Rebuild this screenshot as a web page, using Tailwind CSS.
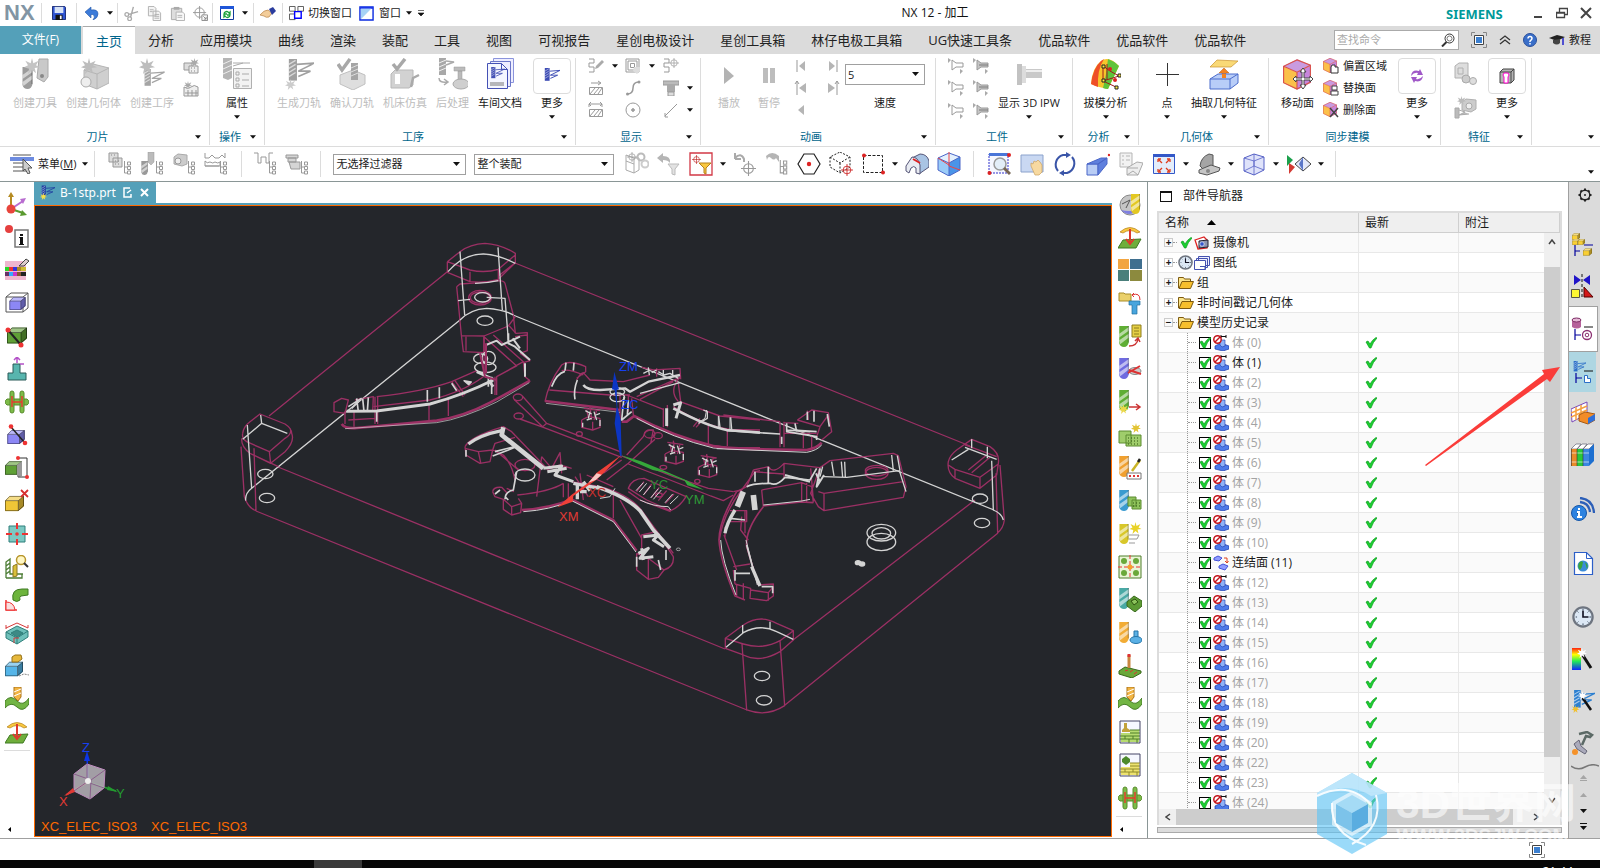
<!DOCTYPE html>
<html lang="zh-CN">
<head>
  <meta charset="UTF-8">
  <meta name="viewport" content="width=device-width, initial-scale=1.0">
  <title>NX 12 - 加工</title>
  <script src="https://cdn.jsdelivr.net/npm/@tailwindcss/browser@4"></script>
</head>
<body class="relative flex flex-col h-screen overflow-hidden bg-white text-[11px] leading-4 text-[#1a1a1a] font-['Open_Sans','Noto_Sans_CJK_SC',sans-serif]">

  <!-- Icon sprite -->
  <svg class="absolute w-0 h-0" aria-hidden="true">
    <!-- shared parts -->
    <symbol id="down" viewBox="0 0 7 4"><path d="M0 0h7L3.5 4z" fill="#111"/></symbol>
    <symbol id="drill" viewBox="0 0 10 22"><path d="M0 0h10v17q-1 5-5 5t-5-4z" fill="currentColor"/><path d="M0 8 10 1v4L0 12zM0 15l10-7v4L1 19z" fill="#fff" opacity=".55"/><path d="M9.500 0v17" stroke="#000" opacity=".3"/></symbol>
    <symbol id="cutter" viewBox="0 0 20 20"><path d="M1 0h6v16H1z" fill="currentColor"/><path d="M1 4l5-3M1 7l5-3M1 10l5-3M1 13l5-3" stroke="#fff" opacity=".6"/><path d="M7 4 20 3 8 9h9L8 13" fill="none" stroke="currentColor" stroke-width="1.200"/></symbol>
    <symbol id="box" viewBox="0 0 20 16"><path d="M0 5h14v11H0z" fill="currentColor"/><path d="M0 5 5 0h15l-6 5z" fill="currentColor"/><path d="M0 5 5 0h15l-6 5z" fill="#fff" opacity=".4"/><path d="m14 5 6-5v11l-6 5z" fill="currentColor"/><path d="m14 5 6-5v11l-6 5z" opacity=".3"/><path d="M.5 5h13.500v10.500H.5zM.5 5 5 .5h14.500L14 5m0 10.500 5.500-5V.5" fill="none" stroke="#000" opacity=".45"/></symbol>
    <symbol id="cube" viewBox="0 0 24 26"><path d="M12 0 24 5 12 11 0 6z" fill="#c99be0"/><path d="m0 6 12 5v15L0 20z" fill="#fbc04a"/><path d="m12 11 12-6v15l-12 6z" fill="#c786dc"/><path d="M12 .5 23.500 5v14.500L12 25.500.5 20V6zM.5 6 12 11l11.500-6M12 11v14" fill="none" stroke="#d9534f"/></symbol>
    <symbol id="star" viewBox="0 0 12 12"><path d="m6 0 1 4 4-2-2 3.500 3 1.500-4 .5 1 4-3-2.500L3 12l.8-4L0 7l3-1.500L1 2l4 2z" fill="currentColor"/></symbol>
    <symbol id="check" viewBox="0 0 12 12"><path d="M1 5 3 4l2 3q2-4 6-6.500l1 .5Q8 5 6 11H4.500z" fill="#19d030" stroke="#0b9a1c" stroke-width=".7"/></symbol>
    <symbol id="treeg" viewBox="0 0 8 14"><path d="M1 0v12h3M1 6h3M4 1h3v3H4zM4 5.500h3v3H4zM4 10h3v3H4z" fill="none" stroke="#999"/></symbol>
    <symbol id="target" viewBox="0 0 14 14"><circle cx="7" cy="7" r="4.500" fill="none" stroke="currentColor"/><path d="M7 0v14M0 7h14" stroke="currentColor"/></symbol>
    <symbol id="clock" viewBox="0 0 24 24"><circle cx="12" cy="12" r="10.500" fill="#dce8f5" stroke="#6e7580" stroke-width="2.400"/><path d="M12 5v7h6" fill="none" stroke="#112" stroke-width="1.800"/><path d="M12 3v1.500M12 19v2M4 12h1.500M19 12h2M6 6l1 1m10 10 1 1M6 18l1-1M17 7l1-1" stroke="#345"/></symbol>

    <!-- quick access -->
    <symbol id="save" viewBox="0 0 16 16"><path d="M.5.5h14l1 1v14H.5z" fill="#2f55d4" stroke="#0b1c66"/><path d="M3 1h10v7H3z" fill="#d7e2f5"/><path d="M4 10h8v6H4z" fill="#111"/><path d="M9 11h2v4H9z" fill="#fff"/></symbol>
    <symbol id="undo" viewBox="0 0 14 14"><path d="M0 6 6 1v3q7-1 7 4 0 4-5 6 2-3 1-4.500Q8 8 6 8.500V12z" fill="#3c7bd9" stroke="#2457a8" stroke-width=".6"/></symbol>
    <symbol id="cut" viewBox="0 0 16 16"><path d="M15 6 5 9m5-8L7 12" stroke="#aaa" stroke-width="1.500"/><circle cx="3" cy="9" r="2" fill="none" stroke="#aaa" stroke-width="1.400"/><circle cx="6" cy="13.500" r="2" fill="none" stroke="#aaa" stroke-width="1.400"/></symbol>
    <symbol id="copy" viewBox="0 0 16 16"><path d="M1.500.5h6l2 2v8h-8zM6.500 5.500h6l2 2v8h-8zM3 4h4M3 6h3M8 9h5M8 11h5M8 13h5" fill="#f4f4f4" stroke="#b0b0b0"/></symbol>
    <symbol id="paste" viewBox="0 0 16 16"><path d="M1.500 2.500h11v12h-11z" fill="#ddd" stroke="#aaa"/><path d="M4 1h6v3H4z" fill="#aaa"/><path d="M6.500 6.500h7l2 2v7h-9zM8 10h5M8 12h5" fill="#f8f8f8" stroke="#b0b0b0"/></symbol>
    <symbol id="snap" viewBox="0 0 16 16"><circle cx="7" cy="7" r="5" fill="none" stroke="#999"/><path d="M7 0v14M0 7h14" stroke="#999"/><path d="M9.500 9.500h6v6h-6zM11 11l3 3m0-2.500V14h-2.500" fill="#fff" stroke="#888"/></symbol>
    <symbol id="refresh" viewBox="0 0 14 14"><path d="M.5.5h13v13H.5z" fill="#fff" stroke="#123a9c"/><path d="M0 0h14v3H0z" fill="#1f56d8"/><path d="M4 7q3-3 5 0l1-1v3H7M10 10q-3 3-5 0l-1 1V8h3" fill="none" stroke="#18a038" stroke-width="1.300"/></symbol>
    <symbol id="hand" viewBox="0 0 16 12"><path d="M0 8q4-5 8-5l4 3-3 4q-3 1-5-1z" fill="#f3cd9a" stroke="#b88348" stroke-width=".7"/><path d="m9 2 4-2 3 4-4 4z" fill="#2b3d9e"/></symbol>
    <symbol id="switch" viewBox="0 0 16 16"><path d="M.5.5h6v5h-6zM9.500.5h6v5h-6zM.5 8.500h6v6h-6z" fill="#fff" stroke="#555"/><path d="M6 6h7v7H6z" fill="#fff" stroke="#00f" stroke-width="1.500"/></symbol>
    <symbol id="window" viewBox="0 0 16 16"><path d="M1 1h14v14H1z" fill="#fff" stroke="#0b2be0" stroke-width="1.500"/><path d="M1 1h14v2H1z" fill="#1a36e8"/><path d="M2 3h11L2 14z" fill="#a7d3f5"/></symbol>

    <!-- tab bar right side -->
    <symbol id="search" viewBox="0 0 14 14"><circle cx="8.500" cy="5.500" r="4.500" fill="none" stroke="#333"/><circle cx="8.500" cy="5.500" r="2.500" fill="none" stroke="#777"/><path d="M5.500 9 1 13.500" stroke="#333" stroke-width="2"/></symbol>
    <symbol id="full" viewBox="0 0 16 16"><path d="M.5 4V.5H4M12 .5h3.500V4M15.500 12v3.500H12M4 15.500H.5V12" fill="none" stroke="#888"/><path d="M3.500 3.500h9v9h-9z" fill="#fff" stroke="#444"/><path d="M5 5h6v6H5z" fill="#3b7fd0"/></symbol>
    <symbol id="help" viewBox="0 0 14 14"><circle cx="7" cy="7" r="6.500" fill="#3a6fc9" stroke="#2a4f9a"/><path d="M5 5.500Q5 3.500 7 3.500t2 2Q9 6.500 7 8v1M7 10v1.500" fill="none" stroke="#fff" stroke-width="1.500"/></symbol>
    <symbol id="cap" viewBox="0 0 16 12"><path d="m0 4 8-3 8 2-8 4z" fill="#222"/><path d="M4 6v3q4 3 7 0V5" fill="#444"/><path d="M14 4v7" stroke="#22c" stroke-width="1.500"/></symbol>

    <!-- ribbon, large -->
    <symbol id="r-tool" viewBox="0 0 30 32"><path d="M19 1h9v18l-4 5-7-4z" fill="#c9c9c9" stroke="#aaa"/><circle cx="22" cy="18" r="2" fill="#888"/><use href="#drill" x="2" y="9" width="11" height="22" color="#9c9c9c"/><use href="#star" x="4" y="0" width="16" height="16" color="#c4c4c4"/></symbol>
    <symbol id="r-geom" viewBox="0 0 30 32"><path d="m5 12 9-6 16 4v15l-12 6L5 26z" fill="#cfcfcf" stroke="#b4b4b4"/><path d="m5 12 13 4v15M18 16l12-6" fill="none" stroke="#b4b4b4"/><circle cx="7" cy="24" r="5" fill="#eee" stroke="#aaa"/><use href="#star" x="2" y="0" width="16" height="16" color="#bdbdbd"/></symbol>
    <symbol id="r-oper" viewBox="0 0 30 32"><use href="#cutter" x="4" y="11" width="26" height="21" color="#a5a5a5"/><use href="#star" x="2" y="0" width="16" height="16" color="#bdbdbd"/></symbol>
    <symbol id="r-prop" viewBox="0 0 30 32"><path d="M1 0h9v20l-4 2-5-2z" fill="#b5b5b5"/><path d="M1 6l9-4M1 11l9-4M1 16l9-4" stroke="#eee"/><path d="M11 5h17M11 8l10-3" stroke="#aaa"/><path d="M11.500 10.500h18v20h-18z" fill="#f2f2f2" stroke="#b0b0b0"/><path d="M14 14h3v3h-3zM14 20h3v3h-3zM14 26h3v3h-3zM20 16h7M20 22h7M20 28h7" fill="none" stroke="#aaa"/></symbol>
    <symbol id="r-gen" viewBox="0 0 30 32"><use href="#cutter" x="3" y="1" width="28" height="27" color="#a0a0a0"/><use href="#star" x="0" y="21" width="13" height="11" color="#ccc"/></symbol>
    <symbol id="r-verify" viewBox="0 0 30 32"><path d="m3 17 13-5 12 5v9l-12 6L3 26z" fill="#dedede" stroke="#c0c0c0"/><path d="M14 5h7v17h-7z" fill="#a5a5a5"/><path d="m14 10 7-3m-7 7 7-3m-7 7 7-3" stroke="#ddd"/><path d="m1 6 4 6L13 1" fill="none" stroke="#a8a8a8" stroke-width="3.500"/></symbol>
    <symbol id="r-sim" viewBox="0 0 30 32"><path d="m1 16 4-4h18v15l-4 3H1z" fill="#d2d2d2" stroke="#b8b8b8"/><path d="M5 16h5v10H5z" fill="#fff"/><path d="m21 29 2-9 6-3" fill="none" stroke="#aaa" stroke-width="2.500"/><path d="m3 6 4 5 8-10" fill="none" stroke="#a8a8a8" stroke-width="3.500"/></symbol>
    <symbol id="r-post" viewBox="0 0 30 32"><path d="M1 0h7v17H1z" fill="#a8a8a8"/><path d="m1 5 7-3M1 9l7-3m-7 7 7-3" stroke="#eee"/><path d="M8 3l8 1-8 3M1 20q0 5 8 4m-3-3 4 3-4 3" fill="none" stroke="#aaa" stroke-width="1.500"/><path d="M16 9h11v4H16zM20 13h4v9h-4z" fill="#bbb" stroke="#999" stroke-width=".5"/><ellipse cx="23" cy="26" rx="8" ry="5" fill="#cfcfcf" stroke="#aaa"/></symbol>
    <symbol id="r-doc" viewBox="0 0 30 32"><path d="M8.500.5h20v24h-20z" fill="#eef" stroke="#8b94dc"/><path d="M5.500 3.500h20v25h-20z" fill="#eef" stroke="#6b76c8"/><path d="M2.500 5.500h14l6 6v19h-20z" fill="#f4f6ff" stroke="#4451b5"/><path d="M16.500 5.500v6h6" fill="none" stroke="#4451b5"/><use href="#cutter" x="5" y="9" width="15" height="14" color="#4451b5"/><path d="M5 25h14M5 27h14" stroke="#777"/></symbol>
    <symbol id="r-play" viewBox="0 0 30 32"><path d="M10 9v17l10-8z" fill="#b3b3b3"/></symbol>
    <symbol id="r-pause" viewBox="0 0 30 32"><path d="M9 10h5v15H9zM16 10h5v15h-5z" fill="#bdbdbd"/></symbol>
    <symbol id="r-ipw" viewBox="0 0 30 32"><path d="M3 6h5v21H3z" fill="#c2c2c2"/><path d="M8 8h4v17H8z" fill="#dcdcdc"/><path d="M12 11h16v9H12z" fill="#c9c9c9"/><path d="M12 13h16" stroke="#eee" stroke-width="2"/></symbol>
    <symbol id="r-draft" viewBox="0 0 30 32"><path d="M10 3Q18-3 28 8L17 31Q9 30 0 26 1 10 10 3z" fill="#f7c52c"/><path d="M17 1q6 2 11 7L17 31q-3 0-5-1 2-8 3-14z" fill="#5fc43a"/><path d="M10 3Q2 10 0 26q4 2 7 3Q6 12 13 1z" fill="#ee4f27"/><path d="M12 8v15l16-5-9-5zM12 23l13 6M16 6v16" fill="none" stroke="#a01a1a"/><path d="M11 7h3v3h-3zM11 21h3v3h-3zM27 16h3v3h-3zM24 28h3v3h-3z" fill="#ffec3d" stroke="#222"/><circle cx="19" cy="11" r="2" fill="#d22"/><circle cx="24" cy="22" r="2" fill="#d22"/></symbol>
    <symbol id="r-point" viewBox="0 0 30 32"><path d="M15.500 5v23M4 16.500h23" stroke="#333"/></symbol>
    <symbol id="r-extract" viewBox="0 0 30 32"><path d="m8 2 21 1-7 6H1z" fill="#f9d976" stroke="#c9922e" stroke-width=".7"/><path d="M13 22v-7h-3l5-5 5 5h-3v7z" fill="#f58220" stroke="#b55a10" stroke-width=".5"/><path d="m1 21 8-5h20v9l-8 6H1z" fill="#b8cdf8" stroke="#4b6ccc"/><path d="M1 21h20l8-5M21 21v10" fill="none" stroke="#4b6ccc"/><path d="M13 20v-4h4v4z" fill="#f58220"/></symbol>
    <symbol id="r-move" viewBox="0 0 30 32"><use href="#cube" x="0" y="1" width="28" height="31"/><path d="m20 10 3 4h-2v6h6v-2l3 3-3 3v-2h-6v5h2l-3 4-3-4h2v-5h-6v2l-3-3 3-3v2h6v-6h-2z" fill="#fff" stroke="#444"/></symbol>
    <symbol id="more-op" viewBox="0 0 16 16"><use href="#cutter" x="0" y="0" width="16" height="16" color="#3c4bb4"/></symbol>
    <symbol id="more-sync" viewBox="0 0 16 16"><path d="M2 8Q3 1 10 3l1-2 3 6H8l1-2Q5 4 2 8z" fill="#a058c8"/><path d="M14 8q-1 7-8 5l-1 2-3-6h6l-1 2q4 1 7-3z" fill="#a058c8"/></symbol>
    <symbol id="more-feat" viewBox="0 0 16 16"><path d="m1 4 3-3h11v11l-3 3H1z" fill="#b5b5b5" stroke="#444"/><path d="M1 4h11v11M12 4l3-3" fill="none" stroke="#444"/><path d="M5 15V9Q3 7 5 5h4q2 2 0 4v6z" fill="#fff" stroke="#f0c"/></symbol>
    <symbol id="f1" viewBox="0 0 24 24"><path d="m2 4 4-3h9v12l-4 3H2zM5 6h5v6H5z" fill="#ddd" stroke="#b0b0b0"/><circle cx="13" cy="17" r="4" fill="#ccc" stroke="#aaa"/><circle cx="20" cy="19" r="3.500" fill="#ddd" stroke="#aaa"/></symbol>
    <symbol id="f2" viewBox="0 0 24 24"><path d="m9 6 4-3 10 1v9l-5 3-9-2z" fill="#ccc" stroke="#b0b0b0"/><circle cx="16" cy="10" r="3" fill="#eee" stroke="#aaa"/><use href="#star" x="4" y="0" width="9" height="9" color="#bbb"/><path d="M2 12h4v10H2zM6 14l6 2-6 3 10-1" fill="#bbb" stroke="#aaa"/></symbol>

    <!-- ribbon, small -->
    <symbol id="s1" viewBox="0 0 16 16"><path d="M1 1h5v4H1v4h5v5H1" fill="none" stroke="#999"/><path d="m8 8 6-6 2 2-6 6-3 1z" fill="#aaa"/></symbol>
    <symbol id="s2" viewBox="0 0 16 16"><path d="M1 1h13v13H1zM3 3h9v9H3zM5.500 5.500h4v4h-4z" fill="none" stroke="#999"/><path d="M9 9h6v4l-3 3-4-3z" fill="#ddd"/></symbol>
    <symbol id="s3" viewBox="0 0 16 16"><path d="M1 1h5v4H1v4h5v5H1" fill="none" stroke="#999"/><use href="#target" x="6" y="0" width="10" height="10" color="#999"/></symbol>
    <symbol id="s4" viewBox="0 0 16 16"><path d="M1.500 7.500h13v7h-13zM2 14l5-6m-1 6 5-6m-1 6 4-6M3 3h9m-2-2 3 2-3 2" fill="none" stroke="#999"/></symbol>
    <symbol id="s5" viewBox="0 0 16 16"><path d="M2 14q6 0 6-6t6-6" fill="none" stroke="#999" stroke-width="1.500"/><circle cx="2.500" cy="14" r="1.500" fill="#999"/><circle cx="14" cy="2" r="1.500" fill="#999"/></symbol>
    <symbol id="s6" viewBox="0 0 16 16"><path d="M0 1h16v4H0z" fill="#bbb" stroke="#999"/><path d="M4 5h8v7H4z" fill="#aaa"/><path d="M5 12h6v4H5z" fill="#ddd" stroke="#999"/></symbol>
    <symbol id="s7" viewBox="0 0 16 16"><path d="M1.500 7.500h13v7h-13zM2 14l5-6m-1 6 5-6m-1 6 4-6M1 5V2h13v3M3 0 1 2l2 2m9-4 2 2-2 2" fill="none" stroke="#999"/></symbol>
    <symbol id="s8" viewBox="0 0 16 16"><circle cx="8" cy="8" r="7" fill="none" stroke="#999"/><path d="M8 6v4M6 8h4" stroke="#999" stroke-width="1.500"/></symbol>
    <symbol id="s9" viewBox="0 0 16 16"><path d="m2 14 12-12M2 11v4h3" fill="none" stroke="#999"/></symbol>
    <symbol id="p1" viewBox="0 0 16 16"><path d="M4 2v12" stroke="#999"/><path d="M12 3v10L6 8z" fill="#b5b5b5"/></symbol>
    <symbol id="p2" viewBox="0 0 16 16"><path d="M12 2v12" stroke="#999"/><path d="M4 3v10l6-5z" fill="#b5b5b5"/></symbol>
    <symbol id="p3" viewBox="0 0 16 16"><path d="M4 1v14M2 4l2-3 2 3" fill="none" stroke="#999"/><path d="M13 3v10L6 8z" fill="#b5b5b5"/></symbol>
    <symbol id="p4" viewBox="0 0 16 16"><path d="M12 1v14m-2-11 2-3 2 3" fill="none" stroke="#999"/><path d="M3 3v10l7-5z" fill="#b5b5b5"/></symbol>
    <symbol id="p5" viewBox="0 0 16 16"><path d="M11 3v10L5 8z" fill="#b5b5b5"/></symbol>
    <symbol id="w1" viewBox="0 0 16 16"><path d="M4 2v10l4-3h7V5H8z" fill="#fff" stroke="#999"/><path d="m0 0 3 2-3 3zM12 11l3 2-3 3z" fill="#aaa"/></symbol>
    <symbol id="w2" viewBox="0 0 16 16"><path d="M4 2v10l4-3h7V5H8z" fill="#c5c5c5" stroke="#999"/><path d="M6 7h9" stroke="#777"/><path d="m0 0 3 2-3 3zM12 11l3 2-3 3z" fill="#aaa"/></symbol>
    <symbol id="g1" viewBox="0 0 16 16"><path d="M1 5h8v7H1z" fill="#ddd" stroke="#999"/><path d="M6 8h9v7H6z" fill="#eee" stroke="#999"/><path d="M8 10h1m2 0h1m-4 3h1m2 0h1" stroke="#888"/><use href="#star" x="7" y="0" width="9" height="9" color="#aaa"/></symbol>
    <symbol id="g2" viewBox="0 0 16 16"><path d="M1 6q4 3 7 0t7 0v9H1zM2 12h13M5 9v6m4-6v6m4-6v6" fill="#eee" stroke="#999"/><use href="#star" x="1" y="0" width="8" height="8" color="#aaa"/></symbol>
    <symbol id="y1" viewBox="0 0 16 16"><use href="#cube" width="14" height="15"/><path d="M9 7h3v2h3v6H8V9z" fill="#fff" stroke="#333"/></symbol>
    <symbol id="y2" viewBox="0 0 16 16"><use href="#cube" width="14" height="15"/><path d="M9 6h5v4H9zM8 11h7v4H8z" fill="#fff" stroke="#444"/></symbol>
    <symbol id="y3" viewBox="0 0 16 16"><use href="#cube" width="14" height="15"/><path d="m7 6 8 9m0-9-8 9" stroke="#444" stroke-width="1.500"/></symbol>

    <!-- selection bar -->
    <symbol id="menu" viewBox="0 0 26 20"><path d="M3 1h18M3 9h14M3 13h14M3 17h14" stroke="#555"/><path d="M0 3h24v4H0z" fill="#6d8be0"/><path d="m13 5 9 9h-4l2 5-2 1-3-5-2 2z" fill="#ccc" stroke="#555"/></symbol>
    <symbol id="b1" viewBox="0 0 24 24"><path d="M1 1h9v9H1zM5 6h9v9H5z" fill="#ddd" stroke="#999"/><path d="M3 3h1m2 0h1M7 9h1m2 0h1m-4 3h1m2 0h1" stroke="#888"/><use href="#treeg" x="15" y="9" width="9" height="14"/></symbol>
    <symbol id="b2" viewBox="0 0 24 24"><path d="M8 0h6v10l-3 3-3-3z" fill="#bbb" stroke="#999" stroke-width=".5"/><use href="#drill" x="1" y="9" width="7" height="14" color="#999"/><use href="#treeg" x="15" y="9" width="9" height="14"/></symbol>
    <symbol id="b3" viewBox="0 0 24 24"><path d="m2 5 4-3 9 1v9l-5 2-8-2z" fill="#ccc" stroke="#aaa"/><circle cx="6" cy="9" r="3" fill="#eee" stroke="#999"/><use href="#treeg" x="15" y="9" width="9" height="14"/></symbol>
    <symbol id="b4" viewBox="0 0 24 24"><path d="M1 1v5h4l3-3 3 3h4l3-3 3 3V1M1 14V9q2 3 5 1 3 2 5 0 3 2 5 0v4zM1 14h14" fill="none" stroke="#999"/><use href="#treeg" x="15" y="9" width="9" height="14"/></symbol>
    <symbol id="b5" viewBox="0 0 24 24"><path d="M1 1h4v10h3V5h5v6h3V1h4" fill="none" stroke="#999"/><use href="#treeg" x="15" y="9" width="9" height="14"/></symbol>
    <symbol id="b6" viewBox="0 0 24 24"><path d="M1 3h12v3H1zM3 6h8v4H3zM4 10h11v7H6z" fill="#d5d5d5" stroke="#999"/><use href="#treeg" x="15" y="9" width="9" height="14"/></symbol>
    <symbol id="c1" viewBox="0 0 24 24"><path d="m1 3 8 3v15l-8-3zM1 9l8 3m0-6h5v12l-5 3" fill="none" stroke="#aaa"/><circle cx="16" cy="5" r="3.500" fill="none" stroke="#bbb" stroke-width="2"/><circle cx="20" cy="12" r="3.500" fill="none" stroke="#ccc" stroke-width="2"/><use href="#target" x="2" y="0" width="10" height="10" color="#999"/></symbol>
    <symbol id="c2" viewBox="0 0 24 24"><path d="M0 6 6 1v3q8 0 7 7-2-3-7-3v3z" fill="#b5b5b5"/><path d="M11 12h11l-4 5v6l-3-1v-5z" fill="#e2e2e2" stroke="#bbb"/></symbol>
    <symbol id="c3" viewBox="0 0 24 24"><path d="M1 1h22v22H1z" fill="#fff" stroke="#d23845" stroke-width="1.300"/><use href="#target" x="3" y="3" width="9" height="9" color="#b22"/><path d="M10 11h12l-5 5v6l-2-1v-5z" fill="#f9c840" stroke="#b5811c"/></symbol>
    <symbol id="c4" viewBox="0 0 24 24"><path d="M2 7V1m0 6h6M2 6q6-6 9 1v3" fill="none" stroke="#aaa" stroke-width="2"/><use href="#target" x="8" y="9" width="15" height="15" color="#999"/></symbol>
    <symbol id="c5" viewBox="0 0 24 24"><path d="M1 4q6-6 13 0v6l-3-4q-2 3-5 0t-4 2z" fill="#b5b5b5"/><use href="#treeg" x="14" y="8" width="9" height="15"/></symbol>
    <symbol id="c6" viewBox="0 0 24 24"><path d="M7 2h10l6 10-6 10H7L1 12z" fill="none" stroke="#222" stroke-width="1.200"/><circle cx="12" cy="12" r="2.200" fill="#d22"/></symbol>
    <symbol id="c7" viewBox="0 0 24 24"><path d="M11 0 21 5v10l-10 6L1 15V5zM1 5l10 6 10-6M11 11v10" fill="none" stroke="#222" stroke-dasharray="2 1.500"/><use href="#target" x="12" y="12" width="12" height="12" color="#c22"/></symbol>
    <symbol id="c8" viewBox="0 0 24 24"><path d="M2.500 3.500h19v17h-19z" fill="none" stroke="#222" stroke-dasharray="3 1.500"/><circle cx="3" cy="3.500" r="2" fill="#d22"/><circle cx="22" cy="20.500" r="2" fill="#d22"/></symbol>
    <symbol id="c9" viewBox="0 0 24 24"><path d="m7 6 8-4q7 0 9 7v6l-10 7V12Q12 7 7 6z" fill="#a9c4e4" stroke="#557"/><path d="m1 14 6-9q6 0 8 8v9l-4-1v-5q-2-3-5 0l-2 5-3-2z" fill="#e8ebf2" stroke="#557"/><path d="m8 7 7 4" stroke="#d22" stroke-width="2"/></symbol>
    <symbol id="c10" viewBox="0 0 24 24"><path d="m1 6 11 5v13L1 18z" fill="#9bccf8"/><path d="m1 6 11-5 11 4-11 6z" fill="#e3f0fd"/><path d="m12 11 11-6v13l-11 6z" fill="#4a94e8"/><path d="m1 6 11-5 11 4v13l-11 6L1 18zM1 6l11 5v13M12 11l11-6" fill="none" stroke="#4a66c8"/><path d="M12 0v14l11 4M1 6l11 7" fill="none" stroke="#e44"/></symbol>
    <symbol id="d1" viewBox="0 0 24 24"><path d="M2 2h19v19H2z" fill="#f5f7ff" stroke="#33c" stroke-dasharray="2 1"/><path d="M2 1h19v3H2z" fill="#4a76d8"/><circle cx="13" cy="12" r="6" fill="#e3eef8" stroke="#999" stroke-width="1.500"/><path d="m17 16 6 6" stroke="#765" stroke-width="3"/><circle cx="2.500" cy="21" r="2" fill="#d22"/><circle cx="22" cy="3" r="2" fill="#d22"/></symbol>
    <symbol id="d2" viewBox="0 0 24 24"><path d="M1 3h22v17H1z" fill="#c9d8f2" stroke="#8ba2cc"/><path d="M11 14v-3l2 1 1-3 2 1 2-2 2 2 2 3v7l-3 3h-4z" fill="#f7d9a0" stroke="#c9a060" stroke-width=".7"/></symbol>
    <symbol id="d3" viewBox="0 0 24 24"><path d="M5 19A10 10 0 0 1 10 3h5M19 5a10 10 0 0 1-5 16H9" fill="none" stroke="#3a55a8" stroke-width="2"/><path d="M13 0v6l5-3zM11 24v-6l-5 3z" fill="#3a55a8"/></symbol>
    <symbol id="d4" viewBox="0 0 24 24"><path d="M1 12h11v11H1z" fill="#b9cdf5" stroke="#4a66c8"/><path d="m1 12 14-6h6l-9 6zM12 12l9-6v6l-9 11z" fill="#5f80dd" stroke="#4a66c8"/><circle cx="23" cy="3" r="1.200" fill="#d22"/></symbol>
    <symbol id="d5" viewBox="0 0 24 24"><path d="M1 1h12v14H1zM3 4h2m-2 4h2m-2 4h2m2-8h4M7 8h4" fill="#f2f2f2" stroke="#b5b5b5"/><path d="m8 16 10-6 6 1-5 12H8zM8 16h11M8 23l6-4 5 4" fill="#eee" stroke="#aaa"/></symbol>
    <symbol id="d6" viewBox="0 0 24 24"><path d="M1.500 2.500h21v19h-21z" fill="#e3edfb" stroke="#3358c8"/><path d="M1 2h22v3H1z" fill="#3358c8"/><path d="m7 8 3 3m7-3-3 3m-7 8 3-3m7 3-3-3M6 7h3M6 7v3m12-3h-3m3 0v3M6 20h3m-3 0v-3m12 3h-3m3 0v-3" stroke="#e03c1c" stroke-width="1.300"/></symbol>
    <symbol id="d7" viewBox="0 0 24 24"><path d="M3 14Q4 5 12 2l4 1v12l-9 3z" fill="#a5a5a5" stroke="#555"/><path d="m2 18 12-5 9 3-1 3-12 4-8-2z" fill="#c5c5c5" stroke="#555"/><circle cx="11" cy="19" r="2" fill="#888"/></symbol>
    <symbol id="d8" viewBox="0 0 24 24"><path d="m2 6 10-4 10 3v13l-10 5-10-4z" fill="#dfe3fa" stroke="#5560c5"/><path d="m2 6 10 3v14M12 9l10-4M12 2v12L2 19m10-5 10 4" fill="none" stroke="#5560c5" stroke-width=".8"/></symbol>
    <symbol id="d9" viewBox="0 0 24 24"><path d="m0 3 6 5-6 6z" fill="#1ca04c"/><path d="m2 11 6 4-6 7z" fill="#d33a33"/><path d="m8 12 8-7 8 7-8 7z" fill="#e3e8fa" stroke="#444"/><path d="m12 12 4-7v14z" fill="#5a76c8"/></symbol>

    <!-- left tool column -->
    <symbol id="l1" viewBox="0 0 24 24"><path d="M6 18V3" stroke="#b58b22" stroke-width="2"/><path d="m3 5 3-5 3 5z" fill="#b58b22"/><path d="m6 17 12-8" stroke="#b86cd0" stroke-width="2"/><path d="m15 7 6-1-3 6z" fill="#b86cd0"/><path d="m6 17 12 4" stroke="#5a9a30" stroke-width="2"/><path d="m17 18 5 5-7 1z" fill="#5a9a30"/><circle cx="6" cy="17" r="4.500" fill="#e8453c"/></symbol>
    <symbol id="l2" viewBox="0 0 24 24"><circle cx="4" cy="4" r="4" fill="#e5403f"/><path d="M10 5h13v17H10z" fill="#fff" stroke="#777" stroke-width="1.500"/><path d="M15 9h3v2h-3zM14 12h4v7h1v1h-5v-1h1v-6h-1z" fill="#111"/></symbol>
    <symbol id="l3" viewBox="0 0 24 24"><path d="M0 3h21v19H0z" fill="#efb6cf"/><path d="M0 9h4v4H0z" fill="#27d827"/><path d="M4 9h4v4H4z" fill="#e33"/><path d="M8 9h4v4H8z" fill="#33d"/><path d="M12 9h4v4h-4z" fill="#a82"/><path d="M16 9h5v4h-5z" fill="#cb3"/><path d="M0 14h4v4H0z" fill="#636"/><path d="M4 14h4v4H4z" fill="#3af"/><path d="M8 14h4v4H8z" fill="#c3c"/><path d="M12 14h4v4h-4z" fill="#853"/><path d="M16 14h5v4h-5z" fill="#222"/><path d="m14 8 7-7 3 2-5 5z" fill="#dcc" stroke="#444"/></symbol>
    <symbol id="l4" viewBox="0 0 24 24"><path d="M1 6h17v15H1zM1 6l5-4h17v15l-5 4M18 6l5-4" fill="none" stroke="#555"/><use href="#box" x="4" y="6" width="17" height="13" color="#8c87f5"/></symbol>
    <symbol id="l5" viewBox="0 0 24 24"><use href="#box" x="2" y="3" width="20" height="17" color="#5fa036"/><path d="m3 6 13 15" stroke="#222" stroke-width="2"/><circle cx="3" cy="6" r="2.500" fill="#e33"/><circle cx="16" cy="21" r="2.500" fill="#e33"/></symbol>
    <symbol id="l6" viewBox="0 0 24 24"><path d="M8 7h7v9h6v7H3v-7h5z" fill="#58b5ae" stroke="#2b5a58"/><path d="M12 6V0M9 3l3-3 3 3m0 4h4" fill="none" stroke="#b452c8" stroke-width="1.500"/></symbol>
    <symbol id="l7" viewBox="0 0 24 24"><path d="M2 9h20q4 3 0 6H2q-4-3 0-6z" fill="#7dbb48" stroke="#588c2c"/><rect x="5" y="1" width="4" height="22" rx="2" fill="#7dbb48" stroke="#588c2c"/><rect x="15" y="1" width="4" height="22" rx="2" fill="#7dbb48" stroke="#588c2c"/><path d="M7 12h10M7 6v11m10-11v11" stroke="#e33f2e" stroke-width="1.500"/></symbol>
    <symbol id="l8" viewBox="0 0 24 24"><use href="#box" x="2" y="7" width="18" height="14" color="#8c87f5"/><path d="m6 4 14 16" stroke="#222" stroke-width="1.500"/><circle cx="6" cy="3.500" r="2.300" fill="#e33"/><circle cx="20" cy="20" r="2.300" fill="#e33"/></symbol>
    <symbol id="l9" viewBox="0 0 24 24"><use href="#box" x="0" y="4" width="17" height="16" color="#5fa036"/><path d="m12 9 5-4v15l-5 1z" fill="#999"/><path d="M13 2h9v19H13" fill="none" stroke="#333"/><circle cx="13" cy="2" r="2" fill="#e33"/><circle cx="22" cy="21" r="2" fill="#e33"/></symbol>
    <symbol id="l10" viewBox="0 0 24 24"><use href="#box" x="0" y="6" width="19" height="17" color="#efc637"/><path d="m16 1 7 7m0-7-7 7" stroke="#d62f2f" stroke-width="1.800"/></symbol>
    <symbol id="l11" viewBox="0 0 24 24"><path d="M4 4h16v16H4z" fill="#7cc8c2" stroke="#2f7f7a"/><path d="M12 1v6m0 10v6M1 12h6m10 0h6" stroke="#e33" stroke-width="2"/><circle cx="12" cy="12" r="1.800" fill="#e33"/></symbol>
    <symbol id="l12" viewBox="0 0 24 24"><path d="M1 23V7l4-3v15h13M1 23h16v-4M1 11l4-3m-4 7 4-3m-4 7 4-3" fill="none" stroke="#4c7c34" stroke-width="1.300"/><path d="m8 11 4-2v12l-4 1z" fill="#d9bf3a" stroke="#8c7720"/><circle cx="16" cy="5" r="4.500" fill="#fff7c4" stroke="#b8962c" stroke-width="1.500"/><path d="m19 8 4 4" stroke="#333" stroke-width="2"/></symbol>
    <symbol id="l13" viewBox="0 0 24 24"><path d="M8 12q-2-11 9-11h6v6l-7 1q-2 1-1 4-3 3-7 0z" fill="#6db43c" stroke="#3f7a22"/><path d="M1 12v10h11" fill="none" stroke="#e33" stroke-width="1.500"/><path d="M1 14q8 0 9 8H1z" fill="#f9dede" stroke="#e33"/></symbol>
    <symbol id="l14" viewBox="0 0 24 24"><path d="m1 11 11-6 11 5v6l-11 7-11-6z" fill="#6fc0ba" stroke="#2f7f7a"/><path d="m6 12 6-3 6 3-6 4z" fill="#3d8a85" stroke="#2f7f7a"/><path d="m1 11 11 6 11-7M12 17v6" fill="none" stroke="#2f7f7a"/><path d="M1 8V4m0 3 11-5 11 5V4M9 22v-5h5" fill="none" stroke="#d63a3a"/></symbol>
    <symbol id="l15" viewBox="0 0 24 24"><use href="#box" x="0" y="7" width="18" height="16" color="#55b5e8"/><path d="m7 3 3-2h6l1 4-4 3H7z" fill="#e6b83c" stroke="#96721a"/><path d="m14 22 5-2 5 1" fill="none" stroke="#888" stroke-dasharray="2 1"/></symbol>
    <symbol id="l16" viewBox="0 0 24 24"><path d="M9 0h7v10l-3 4-4-4z" fill="#f2b544" stroke="#ad7518"/><path d="m9 5 7-3m-7 7 7-3" stroke="#fff"/><path d="M0 14q6-7 12 0 6 6 12-3v6q-6 9-12 3-6-6-12 1z" fill="#72b544" stroke="#467f26"/></symbol>
    <symbol id="l17" viewBox="0 0 24 24"><path d="m5 15 18-1-5 9H0z" fill="#6fae3c" stroke="#3f7a22"/><path d="M2 7q10-9 20 0l-3 1q-7-5-14 0z" fill="#f9c840" stroke="#b5811c" stroke-width=".7"/><path d="M12 4v13m-4-3 4 5 4-5" fill="none" stroke="#dd3a2e" stroke-width="2"/></symbol>

    <!-- right tool column -->
    <symbol id="t1" viewBox="0 0 24 24"><circle cx="12" cy="13" r="10" fill="#c5c5c5" stroke="#888"/><path d="M3 18q8 8 16 0-8 2-16 0z" fill="#7f7fe0"/><path d="m4 12 8-4-4 8" fill="none" stroke="#555"/><use href="#drill" x="13" y="1" width="9" height="22" color="#e3c822"/></symbol>
    <symbol id="t3" viewBox="0 0 24 24"><path d="M0 1h11v10H0z" fill="#f2a541"/><path d="M12 1h12v10H12z" fill="#3f6f8f"/><path d="M0 12h11v11H0z" fill="#4a7f7b"/><path d="M12 12h12v11H12z" fill="#8c8a3e"/></symbol>
    <symbol id="t4" viewBox="0 0 24 24"><path d="M1 2h5l1 1h6v7H1z" fill="#ead06a" stroke="#a88c28"/><path d="M11 10h11v4h-3v9h-5v-9h-3z" fill="#48a5dd" stroke="#23719f" stroke-width=".7"/><path d="M14 4q8-3 8 5m-6-7-2 2 2 2" fill="none" stroke="#d33"/></symbol>
    <symbol id="t5" viewBox="0 0 24 24"><use href="#drill" x="1" y="2" width="10" height="21" color="#5fae34"/><path d="M14 1h9v12h-9z" fill="#e5cf45" stroke="#8f7f1f"/><path d="M16 4h5m-5 3h5m-5 3h5" stroke="#8f7f1f"/><path d="M11 22q8 0 9-7m-3 2 3-3 2 4" fill="none" stroke="#c33" stroke-width="1.500"/></symbol>
    <symbol id="t6" viewBox="0 0 24 24"><use href="#drill" x="1" y="1" width="10" height="21" color="#6f6be0"/><ellipse cx="17" cy="14" rx="6" ry="3.500" fill="#ccc" stroke="#888"/><path d="m10 16 12-7m-11 4 12 4" stroke="#d33" stroke-width="2"/></symbol>
    <symbol id="t7" viewBox="0 0 24 24"><use href="#drill" x="1" y="0" width="10" height="21" color="#5fae34"/><use href="#star" x="0" y="14" width="11" height="10" color="#ecd84a"/><path d="M11 17h10m-3-3 4 3-4 3" fill="none" stroke="#c33" stroke-width="1.500"/></symbol>
    <symbol id="t8" viewBox="0 0 24 24"><path d="M1 8h12v12H1zM8 12h15v11H8z" fill="#9fcd6b" stroke="#5d8c30"/><path d="M10 15h12m-12 3h12m-12 3h12" stroke="#2f5510" stroke-dasharray="1 2"/><use href="#star" x="12" y="0" width="12" height="10" color="#e3c433"/></symbol>
    <symbol id="t9" viewBox="0 0 24 24"><use href="#drill" x="1" y="0" width="10" height="21" color="#f0a030"/><path d="M9 17h14v6H9z" fill="#fff" stroke="#777"/><path d="M11 20h2m2 0h2m2 0h2" stroke="#d33" stroke-width="2"/><path d="m14 15 8-11" stroke="#c9b428" stroke-width="2.500"/><path d="m20 6 2-3" stroke="#222" stroke-width="2.500"/></symbol>
    <symbol id="t10" viewBox="0 0 24 24"><use href="#drill" x="1" y="1" width="10" height="21" color="#3a9bd0"/><path d="M10 8h8v9h-8zM14 11h9v9h-9z" fill="#8fc35c" stroke="#5d8c30"/><path d="M15 14h7m-7 3h7" stroke="#2f5510" stroke-dasharray="1 2"/></symbol>
    <symbol id="t11" viewBox="0 0 24 24"><use href="#drill" x="1" y="2" width="10" height="20" color="#d8c72a"/><path d="M11 13h10l-2 4h-8m0 4h6" fill="none" stroke="#999"/><use href="#star" x="11" y="0" width="13" height="12" color="#e9d227"/></symbol>
    <symbol id="t12" viewBox="0 0 24 24"><path d="M1 1h22v22H1z" fill="#eaf5d8" stroke="#4f7f2a"/><g fill="#6aa83a"><circle cx="6" cy="6" r="3"/><circle cx="18" cy="6" r="3"/><circle cx="6" cy="18" r="3"/><circle cx="18" cy="18" r="3"/></g><path d="M12 0v24M0 12h24" stroke="#e33" stroke-dasharray="4 2"/><circle cx="12" cy="12" r="2.500" fill="#f5a22a"/></symbol>
    <symbol id="t13" viewBox="0 0 24 24"><use href="#drill" x="1" y="0" width="10" height="21" color="#4aa9a5"/><path d="m9 14 7-6 8 5v5l-7 6-8-6z" fill="#5c9a34" stroke="#3a6a1c"/><path d="m13 13 4-2 3 3-4 3z" fill="#8cc35c" stroke="#2f5510"/></symbol>
    <symbol id="t14" viewBox="0 0 24 24"><use href="#drill" x="1" y="1" width="10" height="21" color="#f2ac35"/><path d="M16 10h4v7h-4z" fill="#5ab0e5" stroke="#2575a8"/><ellipse cx="18" cy="19" rx="6" ry="3.500" fill="#5ab0e5" stroke="#2575a8"/></symbol>
    <symbol id="t15" viewBox="0 0 24 24"><path d="m1 17 6-4 16 4v2l-9 5-13-4z" fill="#6aa83a" stroke="#3a6a1c"/><path d="m7 17 3-1m2 2 3-2m1 4 3-2" stroke="#d33"/><path d="M11 1v13" stroke="#c98640" stroke-width="3"/><path d="M11 0v3" stroke="#d33" stroke-width="3"/></symbol>
    <symbol id="t17" viewBox="0 0 24 24"><path d="M2 1h20v22H2z" fill="#f6f8ff" stroke="#446"/><path d="M3 13h9v-3h9v12H3z" fill="#b7dc70"/><path d="M2 16h20M2 19h20M12 10h10M12 13h10M7 16v3m8-3v3m-4 0v4m8-4v4" stroke="#4f7f2a"/><path d="M6 3h3v5l3 2v2H4v-2l2-2z" fill="#c2a23a"/></symbol>
    <symbol id="t18" viewBox="0 0 24 24"><path d="M2 1h20v22H2z" fill="#f6f8ff" stroke="#446"/><path d="M3 14h9v-4h9v12H3z" fill="#ede36f"/><path d="M2 16h20M2 19h20M12 10h10M12 13h10M7 16v3m8-3v3m-4 0v4m8-4v4" stroke="#8f8a2a"/><path d="m4 6 4-3 4 3v3l-4 3-4-3z" fill="#4c8a2c"/></symbol>

    <!-- resource bar -->
    <symbol id="gear" viewBox="0 0 24 24"><circle cx="12" cy="12" r="4.800" fill="none" stroke="#222" stroke-width="1.400"/><circle cx="12" cy="12" r="1" fill="#222"/><path d="M12 5.500v2m0 9v2M5.500 12h2m9 0h2M7.500 7.500l1.300 1.300m6.400 6.400 1.300 1.300m0-9-1.300 1.300m-6.400 6.400-1.300 1.300" stroke="#222" stroke-width="2"/></symbol>
    <symbol id="n1" viewBox="0 0 24 24"><path d="M4 12v11M4 18h5M13 12h9" fill="none" stroke="#00009c" stroke-width="1.200"/><use href="#box" x="1" y="0" width="8" height="7" color="#f9cf35"/><use href="#box" x="1" y="6" width="8" height="6" color="#f9cf35"/><use href="#box" x="7" y="6" width="7" height="6" color="#f9cf35"/><use href="#box" x="12" y="15" width="9" height="8" color="#f9cf35"/></symbol>
    <symbol id="n2" viewBox="0 0 24 24"><path d="M3 1v10l7-5zM19 1v10l-7-5z" fill="#2014c8"/><path d="M11 0v24" stroke="#111" stroke-dasharray="3 2"/><path d="M.5 15.500h8v8h-8z" fill="#fdf733" stroke="#554"/><path d="M13 13v10h9z" fill="#d31818" stroke="#500"/></symbol>
    <symbol id="n3" viewBox="0 0 24 24"><path d="M4 12v11M4 18h6" fill="none" stroke="#00009c" stroke-width="1.200"/><path d="M13 10h9" stroke="#111"/><path d="M1 3v7q5 3 9 0V3z" fill="#b5609a"/><ellipse cx="5.500" cy="3" rx="4.500" ry="2" fill="#e5b8d6" stroke="#7c2a63"/><circle cx="16" cy="18" r="4.500" fill="#fff" stroke="#8c3072" stroke-width="1.300"/><circle cx="16" cy="18" r="1.800" fill="none" stroke="#8c3072"/></symbol>
    <symbol id="n4" viewBox="0 0 24 24"><use href="#cutter" x="1" y="1" width="15" height="13" color="#2c6fc8"/><path d="M5 13v10M5 18h6" fill="none" stroke="#00009c" stroke-width="1.200"/><path d="M13 11h9" stroke="#111"/><path d="M13.500 15.500h3v3h3v4h-6z" fill="#fff" stroke="#2c6fc8"/></symbol>
    <symbol id="n5" viewBox="0 0 24 24"><path d="m0 8 16-7v12L1 21z" fill="#fff" stroke="#7a48b8"/><path d="m0 12 16-7M0 16l16-7M5 6v13m5-15v13" stroke="#f5a040" stroke-width="1.500"/><path d="m8 14 6-3 10 2v6l-7 4-9-3z" fill="#f28c28" stroke="#a85a10"/><path d="m17 17 7-4v6l-7 4z" fill="#2f6fd8"/></symbol>
    <symbol id="n6" viewBox="0 0 24 24"><path d="m0 6 5-5h5L6 6zM6 6l5-5h5l-4 5zM12 6l5-5h6l-5 5z" fill="#fff" stroke="#667" stroke-width=".7"/><path d="M0 6h6v17H0z" fill="#e88a28"/><path d="M6 6h6v17H6z" fill="#28c83a"/><path d="M12 6h6v17h-6z" fill="#3a86e0"/><path d="m18 6 5-5v17l-5 5z" fill="#1d6fd0"/><path d="M0 10h18M0 19h18" stroke="#fff" opacity=".6"/><path d="M.5 6v17M6 6v17m6-17v17" stroke="#333" stroke-width=".6"/></symbol>
    <symbol id="n7" viewBox="0 0 24 24"><circle cx="8" cy="16" r="7.500" fill="#2c82e0" stroke="#1556a8"/><path d="M8 11v2m-2 2h2v5m-2 0h5" stroke="#fff" stroke-width="2"/><path d="M9 1q13 1 14 15M9 5q9 1 10 10" fill="none" stroke="#2c5fb8" stroke-width="2.300"/></symbol>
    <symbol id="n8" viewBox="0 0 24 24"><path d="M3.500 1.500h12l6 6v16h-18z" fill="#fff" stroke="#2c5fc8" stroke-width="1.200"/><path d="M15.500 1.500v6h6" fill="none" stroke="#2c5fc8"/><circle cx="12" cy="15" r="5.500" fill="#3a8cd8"/><path d="M8 12q2-3 4-1l-1 5-2 3q-3-3-1-7zM14 11q4 3 2 7z" fill="#3aa53a"/></symbol>
    <linearGradient id="rainbow" x2="0" y2="1"><stop stop-color="#f21"/><stop offset=".3" stop-color="#ff0"/><stop offset=".6" stop-color="#2e5"/><stop offset="1" stop-color="#12f"/></linearGradient>
    <symbol id="n10" viewBox="0 0 24 24"><path d="M1 1h9v22H1z" fill="url(#rainbow)"/><path d="m11 7 9 14" stroke="#111" stroke-width="3"/><use href="#star" x="6" y="1" width="10" height="10" color="#fff"/></symbol>
    <symbol id="n11" viewBox="0 0 24 24"><use href="#cutter" x="2" y="1" width="22" height="22" color="#2c7fd0"/><path d="m11 8 9 13" stroke="#111" stroke-width="2.500"/><use href="#star" x="7" y="2" width="9" height="9" color="#fff"/><use href="#star" x="0" y="16" width="9" height="8" color="#f0c030"/></symbol>
    <symbol id="n12" viewBox="0 0 24 24"><path d="m8 3 8-2 5 3-2 2-4-1-4 9" fill="none" stroke="#5c6a66" stroke-width="2.500"/><path d="m3 13 5-4 2 6 6 5-2 3-8-5z" fill="#aab" stroke="#667"/><circle cx="4" cy="21" r="3" fill="#f5922a"/></symbol>

    <!-- tree -->
    <symbol id="folder" viewBox="0 0 16 13"><path d="M.5 12V1.500h5l1 1.500h6v2" fill="#fbe48a" stroke="#7d5a10"/><path d="m1 12.500 3-7h11.500l-3 7z" fill="#f7bf2c" stroke="#7d5a10"/></symbol>
    <symbol id="camera" viewBox="0 0 16 14"><path d="m1 4 9-3 3 3v8l-9 1z" fill="#fff" stroke="#d22" stroke-width="1.300"/><path d="m5 5 9-1v7l-9 1z" fill="#8c94b0" stroke="#223"/><circle cx="8" cy="8" r="2.200" fill="#35c" stroke="#fff" stroke-width=".6"/></symbol>
    <symbol id="sheets" viewBox="0 0 16 14"><path d="M4.500.5h11v9h-11zM2.500 2.500h11v9h-11z" fill="#eef" stroke="#4452b0"/><path d="M.5 4.500h11v9H.5z" fill="#fff" stroke="#4452b0"/><path d="M6 10.500h5v3" fill="none" stroke="#4452b0"/></symbol>
    <symbol id="body" viewBox="0 0 16 16"><path d="m2 11 6-3 8 3v3l-6 2-8-2z" fill="#4d79e8" stroke="#1b3ba8" stroke-width=".7"/><path d="M7 5h5v6l-3 1-2-2z" fill="#8fb2f8" stroke="#1b3ba8" stroke-width=".6"/><path d="M8 0v3m0-1.500h5M13 0v3" stroke="#111"/><circle cx="4.500" cy="4.500" r="3.700" fill="#fff" stroke="#c4131a" stroke-width="1.500"/><path d="m2 7 5-5" stroke="#c4131a" stroke-width="1.500"/></symbol>
    <symbol id="sew" viewBox="0 0 16 16"><path d="m1 3 4-2 4 2-3 3-5-1zM6 11l4-2 5 2-3 4-6-2z" fill="#8f9cff" stroke="#4452d8"/><path d="M11 3h3v5m-2-2 2 2 1.500-2" fill="none" stroke="#e0431c"/></symbol>
  </svg>

  <!-- Title bar -->
  <header class="flex items-center h-[26px] shrink-0">
    <div class="flex items-center">
      <span class="w-[41px] pl-1 text-[22px] font-bold text-[#8295a4] font-['Liberation_Sans',sans-serif]">NX</span>
      <span class="w-px h-5 bg-[#dcdcdc]"></span>
      <button aria-label="保存" class="px-[10px]"><svg class="w-[14px] h-[14px]"><use href="#save"/></svg></button>
      <span class="w-px h-5 bg-[#dcdcdc]"></span>
      <button aria-label="撤消" class="flex items-center gap-2 pl-2 pr-1"><svg class="w-[14px] h-[14px]"><use href="#undo"/></svg><svg class="w-[6px] h-1"><use href="#down"/></svg></button>
      <span class="w-px h-5 bg-[#dcdcdc]"></span>
      <div class="flex gap-2 pl-[6px] pr-1">
        <button aria-label="剪切"><svg class="w-[15px] h-[15px]"><use href="#cut"/></svg></button>
        <button aria-label="复制"><svg class="w-[15px] h-[15px]"><use href="#copy"/></svg></button>
        <button aria-label="粘贴"><svg class="w-[15px] h-[15px]"><use href="#paste"/></svg></button>
        <button aria-label="捕捉"><svg class="w-[15px] h-[15px]"><use href="#snap"/></svg></button>
      </div>
      <span class="w-px h-5 bg-[#dcdcdc]"></span>
      <button aria-label="刷新" class="flex items-center gap-2 pl-[7px] pr-[5px]"><svg class="w-[14px] h-[14px]"><use href="#refresh"/></svg><svg class="w-[6px] h-1"><use href="#down"/></svg></button>
      <span class="w-px h-5 bg-[#dcdcdc]"></span>
      <button aria-label="触控" class="px-[6px]"><svg class="w-4 h-3"><use href="#hand"/></svg></button>
      <span class="w-px h-5 bg-[#dcdcdc]"></span>
      <button class="flex items-center gap-1 pl-[6px]"><svg class="w-[15px] h-[15px]"><use href="#switch"/></svg>切换窗口</button>
      <button class="flex items-center gap-[5px] pl-[7px]"><svg class="w-[15px] h-[15px]"><use href="#window"/></svg>窗口<svg class="w-[6px] h-1"><use href="#down"/></svg></button>
      <button aria-label="自定义" class="pl-[6px]"><svg class="w-[6px] h-[7px]" viewBox="0 0 6 7"><path d="M0 .5h6M0 3h6L3 6z" fill="#111" stroke="#111" stroke-width=".6"/></svg></button>
    </div>
    <h1 class="flex-1 text-center text-xs text-[#111]">NX 12 - 加工</h1>
    <div class="flex items-center pr-2">
      <span class="w-[86px] pt-[2px] text-[13px] font-bold text-[#009999] font-['Noto_Sans',sans-serif]">SIEMENS</span>
      <button aria-label="最小化" class="w-6"><svg class="w-3 h-3" viewBox="0 0 12 12"><path d="M2 10h8" stroke="#444" stroke-width="2"/></svg></button>
      <button aria-label="还原" class="w-6"><svg class="w-3 h-3" viewBox="0 0 12 12"><path d="M3.500 5V1.500h8v6H9M.5 5.500h8v5h-8zM.5 6h8" fill="none" stroke="#444" stroke-width="1.300"/></svg></button>
      <button aria-label="关闭"><svg class="w-3 h-3" viewBox="0 0 12 12"><path d="m1 1 10 10m0-10L1 11" stroke="#444" stroke-width="2"/></svg></button>
    </div>
  </header>

  <!-- Ribbon tabs -->
  <nav class="flex h-7 shrink-0 bg-[#dbdbdb] text-[13px] text-[#222]">
    <button class="w-[81px] mr-[2px] bg-[#54a0b9] text-white text-xs">文件(F)</button>
    <a href="#" class="flex items-center px-[13px] bg-white text-[#00658c] border-t border-[#aaa]">主页</a>
    <a href="#" class="flex items-center px-[13px]">分析</a>
    <a href="#" class="flex items-center px-[13px]">应用模块</a>
    <a href="#" class="flex items-center px-[13px]">曲线</a>
    <a href="#" class="flex items-center px-[13px]">渲染</a>
    <a href="#" class="flex items-center px-[13px]">装配</a>
    <a href="#" class="flex items-center px-[13px]">工具</a>
    <a href="#" class="flex items-center px-[13px]">视图</a>
    <a href="#" class="flex items-center px-[13px]">可视报告</a>
    <a href="#" class="flex items-center px-[13px]">星创电极设计</a>
    <a href="#" class="flex items-center px-[13px]">星创工具箱</a>
    <a href="#" class="flex items-center px-[13px]">林仔电极工具箱</a>
    <a href="#" class="flex items-center px-[13px]">UG快速工具条</a>
    <a href="#" class="flex items-center px-[13px]">优品软件</a>
    <a href="#" class="flex items-center px-[13px]">优品软件</a>
    <a href="#" class="flex items-center px-[13px]">优品软件</a>
    <div class="flex items-center gap-3 ml-auto pr-[9px] text-[11px]">
      <label class="flex items-center w-[125px] h-5 bg-white border border-[#aaa]">
        <input type="text" aria-label="查找命令" placeholder="查找命令" class="w-[106px] pl-[2px] outline-none placeholder:text-[#aaa]">
        <svg class="w-[14px] h-[14px]"><use href="#search"/></svg>
      </label>
      <button aria-label="全屏"><svg class="w-4 h-4"><use href="#full"/></svg></button>
      <button aria-label="最小化功能区"><svg class="w-3 h-3" viewBox="0 0 12 12"><path d="m1 6 5-4 5 4M1 10l5-4 5 4" fill="none" stroke="#333" stroke-width="1.300"/></svg></button>
      <button aria-label="帮助"><svg class="w-[14px] h-[14px]"><use href="#help"/></svg></button>
      <a href="#" class="flex items-center gap-1"><svg class="w-4 h-3"><use href="#cap"/></svg>教程</a>
    </div>
  </nav>

  <!-- Ribbon -->
  <section class="flex h-[93px] shrink-0 pt-1 pb-px border-b border-[#dcdcdc]">
    <div class="flex flex-col justify-between w-[210px] border-r border-[#dcdcdc]">
      <div class="flex pl-[13px] gap-[9px] text-[#bdbdbd]">
        <button class="flex flex-col items-center"><svg class="w-[30px] h-8 mb-[5px]"><use href="#r-tool"/></svg>创建刀具</button>
        <button class="flex flex-col items-center"><svg class="w-[30px] h-8 mb-[5px]"><use href="#r-geom"/></svg>创建几何体</button>
        <button class="flex flex-col items-center"><svg class="w-[30px] h-8 mb-[5px]"><use href="#r-oper"/></svg>创建工序</button>
        <div class="flex flex-col gap-[7px]">
          <button aria-label="创建程序"><svg class="w-4 h-4"><use href="#g1"/></svg></button>
          <button aria-label="创建方法"><svg class="w-4 h-4"><use href="#g2"/></svg></button>
        </div>
      </div>
      <div class="flex items-center text-[#00658c]"><span class="flex-1 text-center">刀片</span><svg class="w-[6px] h-1 mr-[8px]"><use href="#down"/></svg></div>
    </div>

    <div class="flex flex-col justify-between w-[55px] border-r border-[#dcdcdc]">
      <button class="flex flex-col items-center"><svg class="w-[30px] h-8 mb-[5px]"><use href="#r-prop"/></svg>属性<svg class="w-[6px] h-1 mt-1"><use href="#down"/></svg></button>
      <div class="flex items-center text-[#00658c]"><span class="flex-1 text-center">操作</span><svg class="w-[6px] h-1 mr-[8px]"><use href="#down"/></svg></div>
    </div>

    <div class="flex flex-col justify-between w-[311px] border-r border-[#dcdcdc]">
      <div class="flex pl-3 gap-[9px] text-[#bdbdbd]">
        <button class="flex flex-col items-center"><svg class="w-[30px] h-8 mb-[5px]"><use href="#r-gen"/></svg>生成刀轨</button>
        <button class="flex flex-col items-center"><svg class="w-[30px] h-8 mb-[5px]"><use href="#r-verify"/></svg>确认刀轨</button>
        <button class="flex flex-col items-center"><svg class="w-[30px] h-8 mb-[5px]"><use href="#r-sim"/></svg>机床仿真</button>
        <button class="flex flex-col items-center"><svg class="w-[30px] h-8 mb-[5px]"><use href="#r-post"/></svg>后处理</button>
        <button class="flex flex-col items-center text-[#1a1a1a]"><svg class="w-[30px] h-8 mb-[5px]"><use href="#r-doc"/></svg>车间文档</button>
        <button class="flex flex-col items-center ml-[2px] text-[#1a1a1a]"><span class="grid place-items-center w-[38px] h-9 mb-px border border-[#dcdcdc] rounded"><svg class="w-4 h-4"><use href="#more-op"/></svg></span>更多<svg class="w-[6px] h-1 mt-1"><use href="#down"/></svg></button>
      </div>
      <div class="flex items-center text-[#00658c]"><span class="flex-1 text-center">工序</span><svg class="w-[6px] h-1 mr-[8px]"><use href="#down"/></svg></div>
    </div>

    <div class="flex flex-col justify-between w-[125px] border-r border-[#dcdcdc]">
      <div class="grid grid-cols-3 gap-y-[6px] pl-3">
        <button aria-label="编辑显示" class="flex items-center gap-2"><svg class="w-4 h-4"><use href="#s1"/></svg><svg class="w-[6px] h-1"><use href="#down"/></svg></button>
        <button aria-label="切削区域" class="flex items-center gap-2"><svg class="w-4 h-4"><use href="#s2"/></svg><svg class="w-[6px] h-1"><use href="#down"/></svg></button>
        <button aria-label="显示原点"><svg class="w-4 h-4"><use href="#s3"/></svg></button>
        <button aria-label="切削层"><svg class="w-4 h-4"><use href="#s4"/></svg></button>
        <button aria-label="进给"><svg class="w-4 h-4"><use href="#s5"/></svg></button>
        <button aria-label="刀柄" class="flex items-center gap-2"><svg class="w-4 h-4"><use href="#s6"/></svg><svg class="w-[6px] h-1"><use href="#down"/></svg></button>
        <button aria-label="毛坯"><svg class="w-4 h-4"><use href="#s7"/></svg></button>
        <button aria-label="中心"><svg class="w-4 h-4"><use href="#s8"/></svg></button>
        <button aria-label="直线" class="flex items-center gap-2"><svg class="w-4 h-4"><use href="#s9"/></svg><svg class="w-[6px] h-1"><use href="#down"/></svg></button>
      </div>
      <div class="flex items-center text-[#00658c]"><span class="flex-1 text-center">显示</span><svg class="w-[6px] h-1 mr-[8px]"><use href="#down"/></svg></div>
    </div>

    <div class="flex flex-col justify-between w-[235px] border-r border-[#dcdcdc]">
      <div class="flex">
        <button class="flex flex-col items-center w-10 ml-2 text-[#bdbdbd]"><svg class="w-[30px] h-8 mb-[5px]"><use href="#r-play"/></svg>播放</button>
        <button class="flex flex-col items-center w-10 text-[#bdbdbd]"><svg class="w-[30px] h-8 mb-[5px]"><use href="#r-pause"/></svg>暂停</button>
        <div class="grid grid-cols-2 gap-x-4 gap-y-[6px] ml-1">
          <button aria-label="首步"><svg class="w-4 h-4"><use href="#p1"/></svg></button>
          <button aria-label="末步"><svg class="w-4 h-4"><use href="#p2"/></svg></button>
          <button aria-label="上一工序"><svg class="w-4 h-4"><use href="#p3"/></svg></button>
          <button aria-label="下一工序"><svg class="w-4 h-4"><use href="#p4"/></svg></button>
          <button aria-label="后退"><svg class="w-4 h-4"><use href="#p5"/></svg></button>
        </div>
        <div class="flex flex-col items-center ml-1 pt-[6px]">
          <div class="relative">
            <select id="speed" class="appearance-none w-20 h-[21px] pl-[2px] border border-[#a0a0a0] bg-white"><option>5</option></select>
            <svg class="absolute right-[6px] top-2 w-[7px] h-1 pointer-events-none"><use href="#down"/></svg>
          </div>
          <label for="speed" class="mt-[10px]">速度</label>
        </div>
      </div>
      <div class="flex items-center text-[#00658c]"><span class="flex-1 text-center">动画</span><svg class="w-[6px] h-1 mr-[8px]"><use href="#down"/></svg></div>
    </div>

    <div class="flex flex-col justify-between w-[137px] border-r border-[#dcdcdc]">
      <div class="flex">
        <div class="grid grid-cols-2 gap-x-[9px] gap-y-[6px] pl-3">
          <button aria-label="显示毛坯"><svg class="w-4 h-4"><use href="#w1"/></svg></button>
          <button aria-label="隐藏毛坯"><svg class="w-4 h-4"><use href="#w2"/></svg></button>
          <button aria-label="显示部件"><svg class="w-4 h-4"><use href="#w1"/></svg></button>
          <button aria-label="隐藏部件"><svg class="w-4 h-4"><use href="#w2"/></svg></button>
          <button aria-label="显示工件"><svg class="w-4 h-4"><use href="#w1"/></svg></button>
          <button aria-label="隐藏工件"><svg class="w-4 h-4"><use href="#w2"/></svg></button>
        </div>
        <button class="flex flex-col items-center ml-[9px] whitespace-nowrap"><svg class="w-[30px] h-8 mb-[5px]"><use href="#r-ipw"/></svg>显示 3D IPW<svg class="w-[6px] h-1 mt-1"><use href="#down"/></svg></button>
      </div>
      <div class="flex items-center text-[#00658c]"><span class="flex-1 text-center">工件</span><svg class="w-[6px] h-1 mr-[8px]"><use href="#down"/></svg></div>
    </div>

    <div class="flex flex-col justify-between w-[66px] border-r border-[#dcdcdc]">
      <button class="flex flex-col items-center"><svg class="w-[30px] h-8 mb-[5px]"><use href="#r-draft"/></svg>拔模分析<svg class="w-[6px] h-1 mt-1"><use href="#down"/></svg></button>
      <div class="flex items-center text-[#00658c]"><span class="flex-1 text-center">分析</span><svg class="w-[6px] h-1 mr-[8px]"><use href="#down"/></svg></div>
    </div>

    <div class="flex flex-col justify-between w-[130px] border-r border-[#dcdcdc]">
      <div class="flex pl-[13px] gap-[9px]">
        <button class="flex flex-col items-center"><svg class="w-[30px] h-8 mb-[5px]"><use href="#r-point"/></svg>点<svg class="w-[6px] h-1 mt-1"><use href="#down"/></svg></button>
        <button class="flex flex-col items-center"><svg class="w-[30px] h-8 mb-[5px]"><use href="#r-extract"/></svg>抽取几何特征<svg class="w-[6px] h-1 mt-1"><use href="#down"/></svg></button>
      </div>
      <div class="flex items-center text-[#00658c]"><span class="flex-1 text-center">几何体</span><svg class="w-[6px] h-1 mr-[8px]"><use href="#down"/></svg></div>
    </div>

    <div class="flex flex-col justify-between w-[172px] border-r border-[#dcdcdc]">
      <div class="flex pl-3">
        <button class="flex flex-col items-center"><svg class="w-[30px] h-8 mb-[5px]"><use href="#r-move"/></svg>移动面</button>
        <div class="flex flex-col gap-[6px] ml-[9px]">
          <button class="flex items-center gap-1"><svg class="w-4 h-4"><use href="#y1"/></svg>偏置区域</button>
          <button class="flex items-center gap-1"><svg class="w-4 h-4"><use href="#y2"/></svg>替换面</button>
          <button class="flex items-center gap-1"><svg class="w-4 h-4"><use href="#y3"/></svg>删除面</button>
        </div>
        <button class="flex flex-col items-center ml-[11px]"><span class="grid place-items-center w-[38px] h-9 mb-px border border-[#dcdcdc] rounded"><svg class="w-4 h-4"><use href="#more-sync"/></svg></span>更多<svg class="w-[6px] h-1 mt-1"><use href="#down"/></svg></button>
      </div>
      <div class="flex items-center text-[#00658c]"><span class="flex-1 text-center">同步建模</span><svg class="w-[6px] h-1 mr-[8px]"><use href="#down"/></svg></div>
    </div>

    <div class="flex flex-col justify-between w-[91px] border-r border-[#dcdcdc]">
      <div class="flex pl-3">
        <div class="flex flex-col gap-[10px] pt-1">
          <button aria-label="布尔"><svg class="w-6 h-6"><use href="#f1"/></svg></button>
          <button aria-label="特征加工"><svg class="w-6 h-6"><use href="#f2"/></svg></button>
        </div>
        <button class="flex flex-col items-center ml-[11px]"><span class="grid place-items-center w-[38px] h-9 mb-px border border-[#dcdcdc] rounded"><svg class="w-4 h-4"><use href="#more-feat"/></svg></span>更多<svg class="w-[6px] h-1 mt-1"><use href="#down"/></svg></button>
      </div>
      <div class="flex items-center text-[#00658c]"><span class="flex-1 text-center">特征</span><svg class="w-[6px] h-1 mr-[8px]"><use href="#down"/></svg></div>
    </div>
    <button aria-label="功能区选项" class="self-end ml-auto pb-[6px] pr-[6px]"><svg class="w-[6px] h-1"><use href="#down"/></svg></button>
  </section>

  <!-- Selection bar -->
  <section class="flex items-center h-[35px] shrink-0 border-b border-[#8a9696]">
    <button class="flex items-center gap-[2px] pl-[10px] pr-[6px]"><svg class="w-[26px] h-5"><use href="#menu"/></svg><span>菜单(<u>M</u>)</span><svg class="w-[6px] h-1 ml-1"><use href="#down"/></svg></button>
    <span class="w-px h-[26px] bg-[#dcdcdc]"></span>
    <div id="bar-view" class="flex pl-[9px] pr-[9px]"></div>
    <span class="w-px h-[26px] bg-[#dcdcdc]"></span>
    <div id="bar-path" class="flex pl-[7px] pr-[7px]"></div>
    <span class="w-px h-[26px] bg-[#dcdcdc]"></span>
    <div class="relative ml-3">
      <select aria-label="过滤器" class="appearance-none w-[133px] h-[21px] pl-[2px] border border-[#a0a0a0] bg-white"><option>无选择过滤器</option></select>
      <svg class="absolute right-[6px] top-2 w-[7px] h-1 pointer-events-none"><use href="#down"/></svg>
    </div>
    <div class="relative ml-2 mr-[7px]">
      <select aria-label="范围" class="appearance-none w-[140px] h-[21px] pl-[2px] border border-[#a0a0a0] bg-white"><option>整个装配</option></select>
      <svg class="absolute right-[6px] top-2 w-[7px] h-1 pointer-events-none"><use href="#down"/></svg>
    </div>
    <div id="bar-snap" class="flex pr-2"></div>
    <span class="w-px h-[26px] bg-[#dcdcdc]"></span>
    <div id="bar-display" class="flex pl-2 pr-2"></div>
    <span class="w-px h-[26px] bg-[#dcdcdc]"></span>
    <button aria-label="选择条选项" class="self-end ml-auto pb-[7px] pr-[6px]"><svg class="w-[6px] h-1"><use href="#down"/></svg></button>
  </section>

  <!-- Work area -->
  <main class="flex flex-1 min-h-0 border-b border-[#a0a0a0]">
    <aside class="flex flex-col w-[34px] pt-[5px] shrink-0">
      <div id="tools-left" class="flex flex-col items-center"></div>
      <span class="w-[26px] mx-1 mt-[2px] border-t border-[#dcdcdc]"></span>
      <button aria-label="收起左工具条" class="mt-auto mb-[6px] ml-2"><svg class="w-[3px] h-[5px]" viewBox="0 0 3 5"><path d="M3 0v5L0 2.500z"/></svg></button>
    </aside>

    <section class="flex flex-col flex-1 min-w-0">
      <div class="flex h-[21px] shrink-0 border-b-2 border-[#54a0b9] box-content">
        <div class="flex items-center w-[122px] h-[21px] pl-[6px] bg-[#54a0b9] text-xs text-white font-['Noto_Sans',sans-serif]">
          <svg class="w-[15px] h-[15px] mr-[5px]" viewBox="0 0 15 15"><use href="#cutter" x="1" y="0" width="14" height="15" color="#1f3fa0"/><use href="#star" x="0" y="8" width="7" height="7" color="#f5e04a"/></svg>
          B-1stp.prt
          <svg class="w-[10px] h-[11px] ml-[7px]" viewBox="0 0 10 11"><path d="M7 1H1v9h7V7M4 6l4-3" fill="none" stroke="#fff" stroke-width="1.500"/></svg>
          <button aria-label="关闭部件" class="ml-[7px]"><svg class="w-[9px] h-[9px]" viewBox="0 0 9 9"><path d="m1 1 7 7m0-7L1 8" stroke="#fff" stroke-width="2"/></svg></button>
        </div>
      </div>
      <!-- Graphics window -->
      <div class="flex-1 min-h-0 mb-px border border-[#ff6a00] bg-[#24262b]">
        <svg class="w-full h-full" viewBox="35 206 1076 630" preserveAspectRatio="xMidYMid slice" fill="none" stroke-linejoin="round">
          <!-- plate outline -->
          <g stroke="#9b3064" stroke-width="1.300">
            <path d="M447 272 269 416M515 263 970 446M278 467 725 649M256 511 747 710M793 640 975 500M785 705 998 533"/>
            <path d="M460 320 252 488M513 315 994 510" stroke="#d4d4d4"/>
          </g>

          <!-- upper left corner and arm -->
          <g transform="translate(230 220) scale(.33333)" stroke-width="4" stroke="#9b3064">
            <path d="M652 125 690 95Q720 72 765 70 810 72 856 100V128L805 168M652 125V157L720 185V155M652 125 720 150Q765 160 805 148L856 105M720 185Q765 190 805 178V148M805 178 856 128"/>
            <path d="M680 200 690 192Q750 190 805 182 822 182 825 190L850 285 856 340M680 200 684 240 694 345 700 395 762 398V348L694 347M708 350V392M762 348 835 318 856 290"/>
            <ellipse cx="750" cy="233" rx="34" ry="22"/><ellipse cx="750" cy="233" rx="29" ry="17"/>
            <path d="M440 530Q580 515 665 485L740 452 765 465M430 560 600 540Q700 515 760 470"/>
            <path d="M335 612Q345 627 380 624L620 602Q700 590 780 548L900 482" stroke-width="8"/>
            <path d="M900 482 885 470 880 425 800 470M762 350 860 438 800 470V525M790 345 880 425M762 350V460M665 485 700 530M675 482 705 525M795 470V525"/>
            <path d="M597 550V602M655 532V588M435 530V612M443 530V612M345 572V612M372 572V620M312 548 335 535 355 540 345 580 312 575ZM375 540 430 530 428 575M355 600 435 595M838 318 858 340 892 338V392L870 400M855 350 890 345M870 400 900 422 880 428"/>
            <path d="M38 640Q40 620 60 605L90 582 165 612Q185 625 185 640 195 665 165 695L122 730 60 700Q33 680 35 655M122 730 118 695 50 665Q35 655 38 640M118 695 165 655Q188 640 180 625M33 680 43 830Q55 865 78 872M72 685 78 872M60 700 145 740"/>
            <g stroke="#d4d4d4">
              <path d="M654 155Q700 102 760 102 800 102 856 130" stroke-width="4"/>
              <path d="M690 95 704 285M804 82 817 270M690 300Q720 268 770 265 820 268 850 285M684 242 720 238M735 190Q770 190 805 182M770 232 825 235 835 360"/>
              <ellipse cx="758" cy="232" rx="24" ry="14"/><ellipse cx="765" cy="302" rx="24" ry="14"/>
              <path d="M350 574 440 573 600 552Q700 525 790 480" stroke-width="9"/>
              <path d="M355 560 395 535M365 565 385 545M380 535 385 575M398 535 402 575M415 532 412 575M592 510V545M628 502V535M440 575V605M785 470V522M775 475V500M665 490 680 512" stroke-width="5"/>
              <path d="M740 455 790 478M775 482 790 500" stroke-width="8"/>
              <path d="M768 375 800 362 815 375 870 350M835 340 835 370 855 380 900 420M848 355 870 385M885 430V470" stroke-width="6"/>
              <path d="m702 482 22 4-8 8z" fill="#d4d4d4"/>
              <ellipse cx="752" cy="416" rx="21" ry="14"/><ellipse cx="776" cy="414" rx="20" ry="20"/><ellipse cx="766" cy="442" rx="32" ry="16"/>
              <path d="M345 626 620 608Q700 596 800 546L898 488" stroke-width="2"/>
              <path d="M38 658 95 610 172 640M95 610 92 585M52 615 65 805Q45 820 47 842"/>
              <ellipse cx="106" cy="762" rx="23" ry="14"/><ellipse cx="111" cy="834" rx="23" ry="14"/>
            </g>
            <path d="M768 370V460M750 400 765 470 800 480" stroke-width="6"/>
          </g>

          <!-- centre parts -->
          <g transform="translate(440 340) scale(.33333)" stroke-width="4" stroke="#9b3064">
            <path d="M315 185Q325 130 365 75 385 58 437 80V95L410 115M328 150 510 165M410 120Q420 100 430 98L450 120 550 125 630 105M365 92Q385 85 430 105M560 165 670 208M590 170 720 112M600 178 700 125M720 112Q685 150 715 185M715 130 722 185M605 82 640 90 720 85 722 118M650 85V110"/>
            <path d="M315 183 540 210M545 245 560 245 582 228Q700 290 820 318 870 327 960 325" stroke-width="8"/>
            <path d="M540 165V240M565 165V215M575 175 580 225M510 165H570M670 205V262M682 195V262M720 185 840 228 960 240M700 200Q790 258 870 268L960 270M805 255V312M862 270V318M780 235 760 260M788 240 768 262"/>
            <ellipse cx="234" cy="172" rx="14" ry="10"/><ellipse cx="236" cy="228" rx="14" ry="9"/><ellipse cx="418" cy="282" rx="9" ry="7"/>
            <path d="M247 168 320 250M222 178 308 260 320 250 540 335M240 237 310 262 545 352M560 345 610 290Q615 268 640 270L632 310M645 298 565 370 500 420M545 348 700 410 805 445M565 372 690 420 812 468M805 445 880 455M812 468 850 482 880 465M490 400 545 360"/>
            <ellipse cx="629" cy="282" rx="16" ry="12"/><ellipse cx="654" cy="287" rx="13" ry="9"/><ellipse cx="670" cy="382" rx="10" ry="6"/><ellipse cx="772" cy="424" rx="8" ry="6"/>
            <path d="M75 320Q90 290 190 260L215 275 320 385M75 320 78 345 120 370 150 365 158 330M75 325 115 335 158 330 165 310 225 292M115 335 122 368M158 330 190 345Q215 370 225 420M165 330 235 390M305 350 290 470M305 350 335 385 360 338 365 400M320 390 360 375 395 385"/>
            <ellipse cx="255" cy="375" rx="30" ry="17"/>
            <path d="M158 455Q160 440 185 442L202 460M158 455 165 470 190 478 190 508 215 525 242 518 245 490 215 500 190 478M215 500V525M200 445 222 455M245 490 235 475M232 465Q330 455 370 430M370 430V472M385 430V475"/>
            <path d="M245 510Q330 505 395 478L520 540 590 632" stroke-width="7"/>
            <path d="M395 425 480 440Q560 460 600 505L700 640M520 465V535M540 480 605 595M590 640V690L625 718 655 712 672 690 625 655 590 640M625 655V718M672 690Q703 680 700 650L650 575 605 585V630M420 400 430 480M405 410 445 470M440 405 520 440M500 450 530 465"/>
            <path d="M565 445Q575 415 612 415L738 470Q720 500 692 512L620 480ZM565 455 600 480 692 515M590 455 612 425M612 463 635 432M634 472 658 442M655 482 680 452M676 490 702 462"/>
            <ellipse cx="657" cy="465" rx="10" ry="6"/>
            <path d="M880 455 905 450 945 395 960 392M905 450Q850 520 838 600M855 590V560M915 510V580" stroke-width="4"/>
            <g stroke="#d4d4d4">
              <path d="M335 140Q350 100 375 94M412 120Q400 150 405 178M375 92 378 68M400 92 402 68" stroke-width="5"/>
              <path d="M430 135Q440 150 480 150L555 145 570 155 625 125 720 105" stroke-width="7"/>
              <path d="M318 190 540 217" stroke-width="2"/>
              <path d="M610 100 630 90M655 95 672 105 690 100 715 115M628 105 625 82M670 90V110M698 90V110M635 98 650 90M600 160 720 128"/>
              <ellipse cx="532" cy="155" rx="22" ry="11"/><ellipse cx="532" cy="172" rx="22" ry="13"/>
              <path d="M552 170 545 240 575 215M565 180 562 225" stroke-width="5"/>
              <path d="M680 205V258M700 195 722 188 708 235" stroke-width="9"/>
              <path d="M700 205Q800 258 860 270L960 278" stroke-width="8"/>
              <path d="M800 210 795 235 780 245M835 228V262M870 232V268M590 235Q700 295 820 324L960 330" stroke-width="3"/>
              <path d="M85 312Q120 285 185 272" stroke-width="10"/>
              <path d="M190 262 185 285 310 385" stroke-width="14"/>
              <path d="M310 385 365 378 345 405 400 425M322 395 380 385" stroke-width="9"/>
              <path d="M158 348 225 322M165 335 230 318M230 395 220 450Q195 455 195 478M165 462 180 450M205 480 195 470M78 330V350" stroke-width="5"/>
              <ellipse cx="255" cy="405" rx="30" ry="18"/>
              <path d="M400 430 480 445M412 432V478M430 425 450 452M420 455H440" stroke-width="10"/>
              <path d="M470 440Q560 470 600 512L640 570 690 625" stroke-width="11"/>
              <path d="M480 475 510 470 525 445M250 515Q330 510 395 482L520 545 588 636" stroke-width="3"/>
              <path d="M595 640 625 625 600 655 640 650M610 590 655 585 640 600 672 620M605 625 610 660" stroke-width="9"/>
              <path d="M655 660 662 690M590 650V680M678 630V660" stroke-width="5"/>
              <path d="M588 452 610 428M598 456 620 430M610 465 632 438M632 474 655 446M640 478 664 450M675 488 698 462M690 492 715 468M600 480Q640 500 685 500L692 510" stroke-width="3"/>
              <ellipse cx="715" cy="628" rx="6" ry="4" stroke-width="2"/>
            </g>
            <!-- clips -->
            <g id="clip"><path d="M425 240V262L458 270 480 262V235M425 240 445 230 480 235M458 245V270M432 205 480 212M440 210 445 232M470 210 462 240M450 200 455 240" /><path d="M428 248V262M480 240V258M450 215 445 235M462 215 470 240M440 240 455 235M436 212 455 222M468 225 480 220" stroke="#d4d4d4" stroke-width="4"/></g>
            <use href="#clip" x="250" y="102"/><use href="#clip" x="350" y="142"/>
          </g>

          <!-- right parts and corners -->
          <g transform="translate(620 340) scale(.33333)" stroke-width="4" stroke="#9b3064">
            <path d="M310 225 480 245M480 245V322M492 245V322M532 240 575 210 625 218 635 275 605 300M532 240 600 260 590 290M600 260 625 225M562 212 565 240M490 280H590M550 285V325M575 285V325M490 248 535 250"/>
            <path d="M280 318 330 326 560 330Q590 325 605 308" stroke-width="8"/>
            <path d="M400 390 445 380Q460 405 492 370L600 383M400 390 380 440 350 455M492 370V415M445 380V430M400 395 490 402M600 383 630 362 820 340 835 347 858 440 850 472 612 512 595 500 572 460 600 383M612 512V460L850 425M595 455 612 460M425 450 545 428 575 440 580 488M425 450 430 500M545 428V488M560 428V488M572 385 580 480"/>
            <ellipse cx="770" cy="400" rx="34" ry="18"/><ellipse cx="770" cy="392" rx="34" ry="16"/>
            <path d="M430 498 545 486 580 488M350 455Q298 540 297 600 300 660 345 768L375 780M430 500Q375 570 380 620L415 735" stroke-width="5"/>
            <path d="M330 512H380V545H325M365 530 362 570 385 600M312 585 350 690M340 680 390 672M345 732 340 690M415 735 460 732V768L440 782 390 775 392 745 345 732M392 750 445 758 460 740M445 758V782M370 730V780M350 735V768"/>
            <path d="M316 895 370 855Q420 822 470 850L520 872V900L480 935Q420 970 370 945L316 925ZM316 895 370 912Q430 930 480 902L520 872M366 912 380 1110Q440 1132 494 1097L480 902"/>
            <path d="M985 365Q990 345 1010 330L1055 298 1110 320Q1140 340 1135 370L1130 405 1080 445 1005 415Q980 395 985 365M985 375 1005 388 1080 412V445M1080 412 1135 372M1005 390V415M1045 390 1100 345M1055 398 1110 352M1140 375 1153 540Q1150 565 1133 578L1128 400M1035 315 1130 350"/>
            <g stroke="#d4d4d4">
              <path d="M296 228 300 262M332 232 335 268M250 210 262 215V235L235 250" />
              <path d="M320 272 480 282M500 250V275L590 290V300M500 270 570 275M485 290V312M525 250 530 275M562 215V240M582 212V245M622 222 628 260M520 270 590 275" stroke-width="5"/>
              <path d="M290 326 560 337Q590 332 605 315" stroke-width="3"/>
              <path d="M380 440Q400 430 450 430 470 440 495 412L570 420 590 385M405 395V425M445 380V432" stroke-width="5"/>
              <path d="M495 405 570 425M600 385 590 440 612 405M588 400 600 425" stroke-width="6"/>
              <path d="M608 380 600 410M612 410 680 412 838 392 858 455M635 365 642 408M664 365 668 412M674 365 676 412M815 345 820 392M832 347 840 392"/>
              <path d="M430 495 545 483 570 478M302 600Q305 660 348 765M378 600 412 735" stroke-width="3"/>
              <path d="M370 455 352 500M400 465 405 510" stroke-width="17"/>
              <path d="M345 510Q320 550 315 580M395 680 420 738" stroke-width="10"/>
              <path d="M330 535 375 540M345 700H390M345 690V722M425 740H458V760M380 615 400 690" stroke-width="5"/>
              <ellipse cx="784" cy="578" rx="43" ry="25"/><ellipse cx="784" cy="580" rx="28" ry="17"/><ellipse cx="784" cy="606" rx="43" ry="26"/>
              <ellipse cx="714" cy="668" rx="8" ry="6" fill="#d4d4d4"/><ellipse cx="726" cy="672" rx="8" ry="6" fill="#d4d4d4"/>
              <path d="M318 922 370 878Q420 850 470 875L520 898M368 855V880M450 845V868"/>
              <ellipse cx="426" cy="1008" rx="23" ry="14"/><ellipse cx="432" cy="1081" rx="23" ry="14"/>
              <path d="M1035 322 1130 358M995 360 1045 328M1102 320V355M1115 362 1120 510Q1145 520 1150 540M1055 298V325"/>
              <ellipse cx="1080" cy="476" rx="23" ry="14"/><ellipse cx="1086" cy="549" rx="23" ry="14"/>
            </g>
          </g>

          <!-- work and machine coordinate axes -->
          <g transform="translate(440 340) scale(.33333)" stroke="none">
            <path d="M523 95 516 148 524 150 530 200 524 250 540 348 545 348 542 240 532 200 530 150 537 148Z" fill="#0c35c4"/>
            <path d="M543 346 470 398 445 428 395 464 352 502 398 485 400 468 468 420 488 402Z" fill="#f04038"/>
            <path d="m470 400-25 28 22-8 18-16z" fill="#f6c9c6"/>
            <path d="m543 346 60 18 64 26 70 30 55 30-50-14-8-14-66-26-30-6-60-26z" fill="#35a83a"/>
          </g>
          <g stroke="none" class="text-[13px] font-['Liberation_Sans',sans-serif]">
            <text x="619" y="371" fill="#1740f0">ZM</text><text x="621" y="409" fill="#1740f0">ZC</text>
            <text x="588" y="497" fill="#c8302e">XC</text><text x="559" y="521" fill="#e03a35">XM</text>
            <text x="650" y="489" fill="#2b8c34">YC</text><text x="685" y="504" fill="#2f9a38">YM</text>
          </g>

          <!-- view triad -->
          <g stroke-width="1.500">
            <path d="M88 782 87 756" stroke="#0c35e4"/><path d="m88 782 28 9" stroke="#239a30"/><path d="m88 782-22 13" stroke="#e03a35"/>
            <path d="m87 764 18 6-1 18-14 11-16-8v-17z" fill="#b9b4bb" fill-opacity=".85" stroke="#c08cc0" stroke-width="1"/>
            <path d="m74 774 17 6 14-10M91 780l-1 19M87 764v18l-13 9m13-9 17 6" stroke="#8a5f8c" stroke-width="1"/>
            <circle cx="88" cy="781" r="3" fill="#eee"/>
            <g stroke="none"><path d="m87 751-3 10h6z" fill="#0c35e4"/><path d="m118 792-10-6-1 4z" fill="#239a30"/><path d="m64 796 11-4-2-4z" fill="#e03a35"/></g>
          </g>
          <g stroke="none" class="text-[13px] font-['Liberation_Sans',sans-serif]">
            <text x="82" y="752" fill="#1740f0">Z</text><text x="116" y="798" fill="#239a30">Y</text><text x="59" y="806" fill="#e03a35">X</text>
            <text x="41" y="831" fill="#ff6a00">XC_ELEC_ISO3</text><text x="151" y="831" fill="#ff6a00">XC_ELEC_ISO3</text>
          </g>
        </svg>
      </div>
    </section>

    <aside class="flex flex-col w-9 pt-[5px] shrink-0 border-r border-[#8a9696]">
      <div id="tools-right" class="flex flex-col items-center"></div>
      <span class="w-[26px] ml-1 mt-[2px] border-t border-[#dcdcdc]"></span>
      <button aria-label="收起右工具条" class="mt-auto mb-[6px] ml-2"><svg class="w-[3px] h-[5px]" viewBox="0 0 3 5"><path d="M3 0v5L0 2.500z"/></svg></button>
    </aside>

    <!-- Part navigator -->
    <section class="flex flex-col w-[420px] shrink-0 pl-[9px] pr-[6px] pb-[5px] text-xs">
      <h2 class="flex items-center gap-[11px] h-7 pl-[3px] shrink-0">
        <span class="w-3 h-[11px] border border-t-2 border-[#111]"></span>部件导航器
      </h2>
      <div class="relative flex-1 min-h-0 mt-px overflow-hidden border-2 border-b-0 border-[#dcdcdc]">
        <table class="w-full table-fixed border-separate border-spacing-0">
          <colgroup><col class="w-[200px]"><col class="w-[100px]"><col></colgroup>
          <thead>
            <tr class="bg-[#efefef] text-left">
              <th class="h-[20px] p-0 pl-[6px] font-normal border-b border-r border-[#cfcfcf]"><span class="flex items-center gap-[18px]">名称<svg class="w-[9px] h-[5px]" viewBox="0 0 9 5"><path d="M4.500 0 9 5H0z"/></svg></span></th>
              <th class="p-0 pl-[6px] font-normal border-b border-r border-[#cfcfcf]">最新</th>
              <th class="p-0 pl-[6px] font-normal border-b border-r border-[#cfcfcf]">附注</th>
            </tr>
          </thead>
          <tbody id="tree"></tbody>
        </table>
        <div class="absolute top-[20px] right-0 bottom-0 flex flex-col w-4 bg-[#efefef]">
          <button aria-label="向上" class="grid place-items-center h-[18px] mb-4"><svg class="w-2 h-[6px]" viewBox="0 0 8 6"><path d="m1 5 3-4 3 4" fill="none" stroke="#444" stroke-width="1.500"/></svg></button>
          <div class="flex-1 bg-[#cdcdcd]"></div>
          <button aria-label="向下" class="grid place-items-center h-[18px] mt-[34px]"><svg class="w-2 h-[6px]" viewBox="0 0 8 6"><path d="m1 1 3 4 3-4" fill="none" stroke="#444" stroke-width="1.500"/></svg></button>
        </div>
      </div>
      <div class="flex h-4 shrink-0 border-x-2 border-[#dcdcdc] bg-[#efefef]">
        <button aria-label="向左" class="grid place-items-center w-[17px]"><svg class="w-[6px] h-2" viewBox="0 0 6 8"><path d="M5 1 1 4l4 3" fill="none" stroke="#444" stroke-width="1.500"/></svg></button>
        <div class="flex-1 bg-[#cdcdcd]"></div>
        <button aria-label="向右" class="grid place-items-center w-[17px] ml-[14px] mr-4"><svg class="w-[6px] h-2" viewBox="0 0 6 8"><path d="m1 1 4 3-4 3" fill="none" stroke="#444" stroke-width="1.500"/></svg></button>
      </div>
      <div class="h-[6px] mt-[2px] shrink-0 bg-[#dcdcdc] border border-[#aaa]"></div>
    </section>

    <!-- Resource bar -->
    <nav class="flex flex-col items-center w-8 shrink-0 bg-[#dbdbdb] border-l border-[#a0a0a0]">
      <button aria-label="设置" class="grid place-items-center w-full h-[42px] pb-4"><svg class="w-6 h-6"><use href="#gear"/></svg></button>
      <button aria-label="装配导航器" class="grid place-items-center w-full pr-1 h-[42px]"><svg class="w-6 h-6"><use href="#n1"/></svg></button>
      <button aria-label="约束导航器" class="grid place-items-center w-full pr-1 h-[40px]"><svg class="w-6 h-6"><use href="#n2"/></svg></button>
      <button aria-label="部件导航器" class="grid place-items-center w-[29px] mr-[2px] h-[46px] bg-white border-y border-r border-[#a0a0a0]"><svg class="w-6 h-6"><use href="#n3"/></svg></button>
      <button aria-label="工序导航器" class="grid place-items-center w-[27px] mr-1 h-[40px] bg-[#aed6e2]"><svg class="w-6 h-6"><use href="#n4"/></svg></button>
      <button aria-label="加工特征" class="grid place-items-center w-full pr-1 h-[42px]"><svg class="w-6 h-6"><use href="#n5"/></svg></button>
      <button aria-label="重用库" class="grid place-items-center w-full pr-1 h-[42px] mb-3"><svg class="w-6 h-6"><use href="#n6"/></svg></button>
      <button aria-label="HD3D 工具" class="grid place-items-center w-full pr-1 h-[42px] mb-3"><svg class="w-6 h-6"><use href="#n7"/></svg></button>
      <button aria-label="Web 浏览器" class="grid place-items-center w-full pr-1 h-[42px] mb-3"><svg class="w-6 h-6"><use href="#n8"/></svg></button>
      <button aria-label="历史记录" class="grid place-items-center w-full pr-1 h-[42px]"><svg class="w-[22px] h-[22px]"><use href="#clock"/></svg></button>
      <button aria-label="可视化" class="grid place-items-center w-full pr-1 h-[42px]"><svg class="w-6 h-6"><use href="#n10"/></svg></button>
      <button aria-label="加工向导" class="grid place-items-center w-full pr-1 h-[42px]"><svg class="w-6 h-6"><use href="#n11"/></svg></button>
      <button aria-label="角色" class="grid place-items-center w-full pr-1 h-[42px]"><svg class="w-6 h-6"><use href="#n12"/></svg></button>
      <svg class="w-7 h-[6px]" viewBox="0 0 28 6"><path d="M0 2q7 5 14 1t14-1" fill="none" stroke="#777" stroke-width="1.500"/></svg>
      <svg class="w-[7px] h-[60px] mt-1 mr-[2px]" viewBox="0 0 7 60"><path d="M3.500 1 7 5H0zM0 6h7v1H0zM3.500 19 7 23H0z" fill="#a5a5a5"/><path d="M0 35h7l-3.500 4zM0 49h7v1H0zM0 52h7l-3.500 4z" fill="#111"/></svg>
    </nav>
  </main>

  <!-- Status bar -->
  <footer class="flex items-center justify-end h-[21px] shrink-0 pr-[55px]">
    <button aria-label="全屏显示"><svg class="w-4 h-4"><use href="#full"/></svg></button>
  </footer>
  <div class="flex justify-between h-2 shrink-0 overflow-hidden bg-[#070707] text-white">
    <span class="w-12 ml-[314px] bg-[#3a3a3a]"></span>
    <time class="pt-1 pr-[27px] text-xs">21:44</time>
  </div>

  <!-- Callout arrow -->
  <svg class="absolute right-10 top-[367px] w-[135px] h-[99px] pointer-events-none" viewBox="0 0 135 99"><path d="M0 98 119 7 117 3 135 0 125 15 122 12 1 99z" fill="#fa3c39"/></svg>

  <!-- Watermark -->
  <div class="absolute right-6 bottom-3 flex items-center gap-2 pointer-events-none">
    <svg class="w-[72px] h-[84px]" viewBox="0 0 72 84">
      <path d="M36 1 71 21V62L36 82 1 62V21z" fill="#5cc3f5" opacity=".62"/>
      <path d="M36 1 71 21 55 24Q30 8 1 24V21z" fill="#c5e9fb" opacity=".8"/>
      <path d="M1 24Q34 8 55 33M16 31Q14 62 50 73M60 23Q68 55 36 72" fill="none" stroke="#fff" stroke-width="2" opacity=".9"/>
      <path d="m36 19 20 11v23L36 64 16 53V30z" fill="#fff" opacity=".6"/>
      <path d="m36 23 16 9-16 9-16-9z" fill="#a5dbf5"/><path d="m20 32 16 9v19l-16-9z" fill="#7cc3ea"/><path d="m52 32-16 9v19l16-9z" fill="#5aade0"/>
    </svg>
    <div class="text-white/60 font-bold font-['Liberation_Sans','Noto_Sans_CJK_SC',sans-serif]">
      <p class="text-[42px] leading-[44px]">3D世界网</p>
      <p class="text-[19px] leading-5">WWW.3DSJW.COM</p>
    </div>
  </div>

  <script>
    // Icon buttons; '|' after an id adds a drop-down arrow
    function fillBar(id, icons, cell) {
      document.getElementById(id).innerHTML = icons.map((name) => {
        const key = name.replace('|', '');
        const arrow = name.endsWith('|') ? '<svg class="w-[6px] h-1 mx-[3px]"><use href="#down"/></svg>' : '';
        return `<button aria-label="${key}" class="flex items-center"><span class="${cell}"><svg class="w-6 h-6"><use href="#${key}"/></svg></span>${arrow}</button>`;
      }).join('');
    }

    fillBar('bar-view', ['b1', 'b2', 'b3', 'b4'], 'grid place-items-center w-8 h-8');
    fillBar('bar-path', ['b5', 'b6'], 'grid place-items-center w-8 h-8');
    fillBar('bar-snap', ['c1', 'c2', 'c3|', 'c4', 'c5', 'c6', 'c7', 'c8|', 'c9', 'c10'], 'grid place-items-center w-8 h-8');
    fillBar('bar-display', ['d1', 'd2', 'd3', 'd4', 'd5', 'd6|', 'd7|', 'd8|', 'd9|'], 'grid place-items-center w-[33px] h-8');

    const column = 'grid place-items-center w-8 h-[33px]';
    fillBar('tools-left', ['l1', 'l2', 'l3', 'l4', 'l5', 'l6', 'l7', 'l8', 'l9', 'l10', 'l11', 'l12', 'l13', 'l14', 'l15', 'l16', 'l17'], column);
    fillBar('tools-right', ['t1', 'l17', 't3', 't4', 't5', 't6', 't7', 't8', 't9', 't10', 't11', 't12', 't13', 't14', 't15', 'l16', 't17', 't18', 'l7'], column);

    // Navigator tree
    const check = '<svg class="w-3 h-3"><use href="#check"/></svg>';
    const groups = [
      { name: '摄像机', sign: '+', icons: '<svg class="w-3 h-3 ml-[2px] mr-[2px]"><use href="#check"/></svg><svg class="w-4 h-[14px] mr-[3px]"><use href="#camera"/></svg>' },
      { name: '图纸', sign: '+', icons: '<svg class="w-[15px] h-[15px] mr-px"><use href="#clock"/></svg><svg class="w-4 h-[14px] mr-[3px]"><use href="#sheets"/></svg>' },
      { name: '组', sign: '+', icons: '<svg class="w-4 h-[13px] mr-[3px]"><use href="#folder"/></svg>' },
      { name: '非时间戳记几何体', sign: '+', icons: '<svg class="w-4 h-[13px] mr-[3px]"><use href="#folder"/></svg>' },
      { name: '模型历史记录', sign: '−', icons: '<svg class="w-4 h-[13px] mr-[3px]"><use href="#folder"/></svg>' },
    ];
    const bodies = [];
    for (let i = 0; i <= 24; i++) {
      if (i !== 21) bodies.push(i);
    }

    const row = (first, latest) => `
      <tr class="odd:bg-[#fafafa]">
        <td class="h-[20px] p-0 border-b border-r border-[#e8e8e8]">${first}</td>
        <td class="p-0 pl-[6px] border-b border-r border-[#e8e8e8]">${latest}</td>
        <td class="p-0 border-b border-[#e8e8e8]"></td>
      </tr>`;

    const groupRows = groups.map((g) => row(`
      <div class="flex items-center h-[19px] pl-[5px]">
        <button aria-label="展开" class="grid place-items-center w-[9px] h-[9px] border border-[#ccc] text-[10px] leading-[7px] font-bold">${g.sign}</button>
        <span class="w-1 mr-px border-t border-dotted border-[#999]"></span>${g.icons}<span>${g.name}</span>
      </div>`, ''));

    const bodyRows = bodies.map((n) => {
      const sewn = n === 11;
      const tone = sewn || n === 1 ? 'text-[#1a1a1a]' : 'text-[#a3a3a3]';
      return row(`
      <div class="flex items-center h-[19px] ml-[28px] border-l border-dotted border-[#999]">
        <span class="w-2 mr-[3px] border-t border-dotted border-[#999]"></span>
        <label class="relative flex items-center ${tone}">
          <input type="checkbox" checked class="appearance-none w-3 h-3 mr-[2px] bg-white border border-black">
          <svg class="absolute left-0 w-3 h-3 pointer-events-none"><use href="#check"/></svg>
          <svg class="w-4 h-4 mr-[3px]"><use href="#${sewn ? 'sew' : 'body'}"/></svg>${sewn ? '连结面' : '体'} (${n})
        </label>
      </div>`, check);
    });

    document.getElementById('tree').innerHTML = groupRows.concat(bodyRows).join('');
  </script>
</body>
</html>
